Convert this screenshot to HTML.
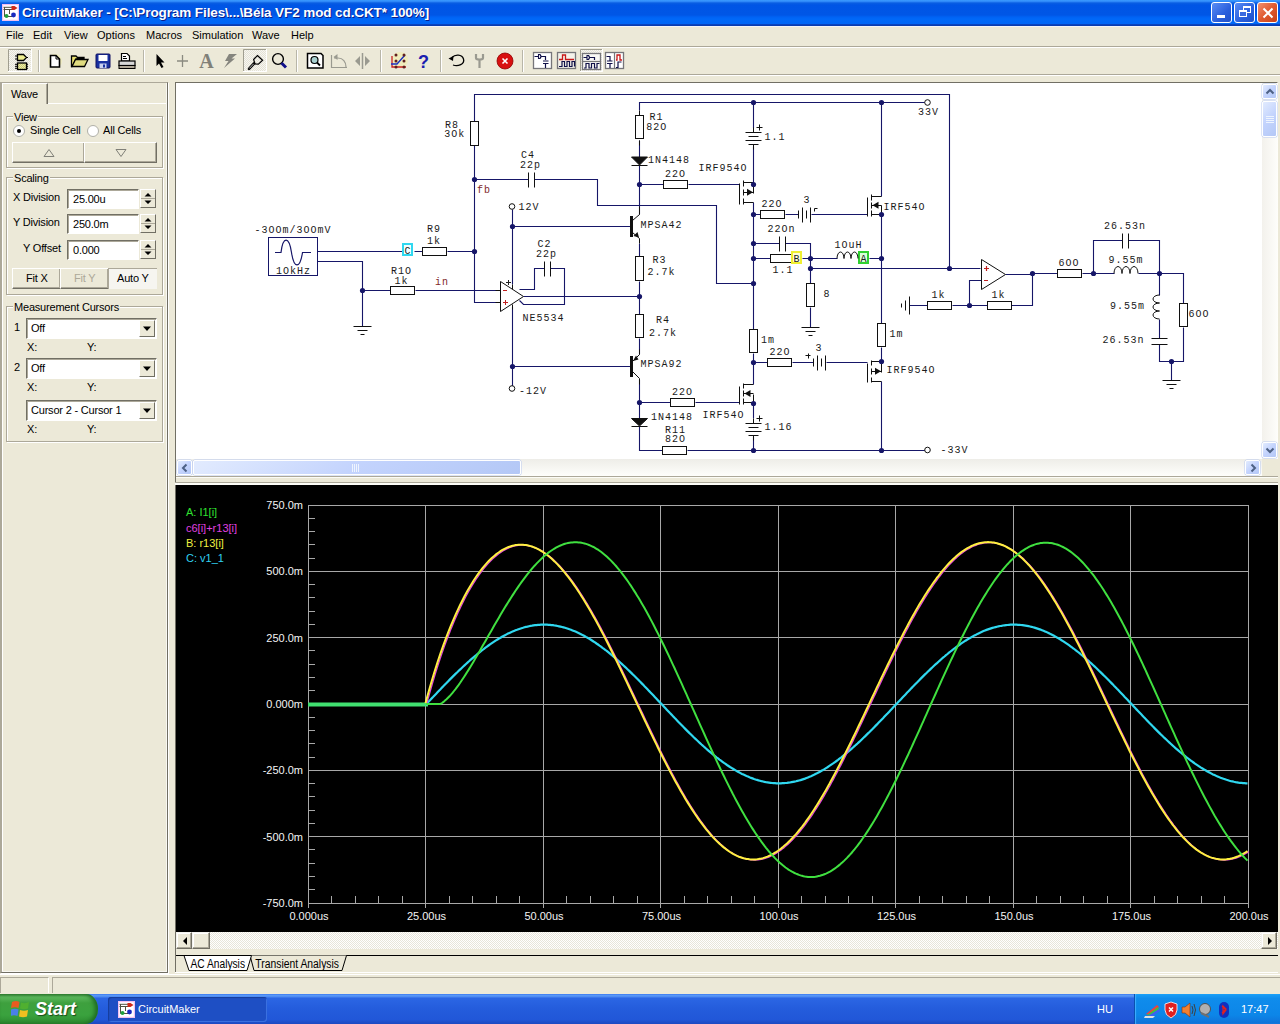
<!DOCTYPE html>
<html><head><meta charset="utf-8">
<style>
*{margin:0;padding:0;box-sizing:border-box}
html,body{width:1280px;height:1024px;overflow:hidden;background:#ECE9D8;font-family:"Liberation Sans",sans-serif;font-size:11px;color:#000}
.a{position:absolute}
#title{left:0;top:0;width:1280px;height:26px;background:linear-gradient(#3C9CFF 0px,#2E88F8 1.5px,#0A5EE2 3px,#0055E5 5px,#0056E6 15px,#0062F4 17px,#0068F8 19px,#0066F6 23.5px,#0A44C0 24.5px,#0838A8 26px)}
#title .t{left:22px;top:5px;color:#fff;font-weight:bold;font-size:13.5px;white-space:nowrap;letter-spacing:-0.1px;text-shadow:1px 1px 0 #0A1E8C}
.wb{top:2px;width:21px;height:21px;border:1px solid #fff;border-radius:3px;background:linear-gradient(135deg,#5A8DF5,#2A5FDC 60%,#2050C8)}
#menu{left:0;top:27px;width:1280px;height:19px;background:#ECE9D8}
#menu span{position:absolute;top:2px;font-size:11px}
.hl{background:#ACA899}
.hw{background:#fff}
.tbsep{width:1px;background:#ACA899;border-right:1px solid #fff}
.press{background:#F4F3EE;border:1px solid;border-color:#ACA899 #fff #fff #ACA899}
.grp{border:1px solid #ACA899;box-shadow:1px 1px 0 #fff,inset 1px 1px 0 #fff}
.grp .lbl{position:absolute;top:-6px;left:6px;background:#ECE9D8;padding:0 1px;font-size:11px}
.btn{background:#ECE9D8;border:1px solid;border-color:#fff #716F64 #716F64 #fff;box-shadow:inset -1px -1px 0 #ACA899}
.inp{background:#fff;border:1px solid;border-color:#716F64 #fff #fff #716F64;box-shadow:inset 1px 1px 0 #ACA899}
.mono{font-family:"Liberation Mono",monospace}
</style></head><body>

<!-- Title bar -->
<div id="title" class="a">
  <svg class="a" style="left:2px;top:4px" width="17" height="17" viewBox="0 0 17 17">
    <rect x="0.5" y="0.5" width="16" height="16" fill="#F8E0F8" stroke="#F0C0F0"/>
    <rect x="1.5" y="1.5" width="14" height="14" fill="#fff"/>
    <path d="M1.5 3.3h9M1.5 5.5h9M2.5 3v9.5h9M7.5 5.5v4.5" stroke="#505040" stroke-width="1" fill="none"/>
    <path d="M9.5 2 h3 l3 2 l-3 2 h-3z" fill="#D02818"/><circle cx="11.5" cy="11" r="2.4" fill="#1828C0"/><circle cx="4.5" cy="12" r="2" fill="#20A040"/>
  </svg>
  <div class="a t">CircuitMaker - [C:\Program Files\...\Béla VF2 mod cd.CKT* 100%]</div>
  <div class="a wb" style="left:1211px"><div class="a" style="left:5px;top:12px;width:8px;height:3px;background:#fff"></div></div>
  <div class="a wb" style="left:1234px"><div class="a" style="left:8px;top:3px;width:8px;height:7px;border:1px solid #fff;border-top-width:2px"></div><div class="a" style="left:4px;top:7px;width:8px;height:7px;border:1px solid #fff;border-top-width:2px;background:#3A6AE0"></div></div>
  <div class="a wb" style="left:1257px;background:linear-gradient(135deg,#F09070,#E05A30 50%,#C84018)"><svg class="a" style="left:4px;top:4px" width="12" height="12"><path d="M1.5 1.5L10.5 10.5M10.5 1.5L1.5 10.5" stroke="#fff" stroke-width="2"/></svg></div>
</div>

<div class="a" style="left:0;top:26px;width:1280px;height:1px;background:#F4F4F8"></div>
<!-- Menu -->
<div id="menu" class="a">
  <span style="left:6px">File</span><span style="left:33px">Edit</span><span style="left:64px">View</span><span style="left:97px">Options</span><span style="left:146px">Macros</span><span style="left:192px">Simulation</span><span style="left:252px">Wave</span><span style="left:291px">Help</span>
</div>
<div class="a hl" style="left:0;top:46px;width:1280px;height:1px"></div>
<div class="a hw" style="left:0;top:47px;width:1280px;height:1px"></div>
<!-- toolbar -->
<div class="a hl" style="left:0;top:74px;width:1280px;height:1px"></div>
<div class="a hw" style="left:0;top:75px;width:1280px;height:1px"></div>
<svg class="a" style="left:0;top:48px" width="640" height="26" viewBox="0 48 640 26">
<defs><pattern id="dith" width="2" height="2" patternUnits="userSpaceOnUse"><rect width="2" height="2" fill="#F7F6F1"/><rect width="1" height="1" fill="#E4E2D6"/><rect x="1" y="1" width="1" height="1" fill="#E4E2D6"/></pattern><pattern id="ydith" width="2" height="2" patternUnits="userSpaceOnUse"><rect width="2" height="2" fill="#F0F0A0"/><rect width="1" height="1" fill="#C8C880"/><rect x="1" y="1" width="1" height="1" fill="#C8C880"/></pattern></defs>
<rect x="8" y="49" width="24" height="23" fill="url(#dith)"/>
<path d="M8.5 72 V49.5 H32" stroke="#A09E90" fill="none"/>
<path d="M8 71.5 H31.5 V49" stroke="#FFFFFF" fill="none"/>
<rect x="243" y="49" width="24" height="23" fill="url(#dith)"/>
<path d="M243.5 72 V49.5 H267" stroke="#A09E90" fill="none"/>
<path d="M243 71.5 H266.5 V49" stroke="#FFFFFF" fill="none"/>
<rect x="580" y="49" width="23" height="23" fill="url(#dith)"/>
<path d="M580.5 72 V49.5 H603" stroke="#A09E90" fill="none"/>
<path d="M580 71.5 H602.5 V49" stroke="#FFFFFF" fill="none"/>
<rect x="38" y="50" width="1" height="22" fill="#B8B6A8"/><rect x="39" y="50" width="1" height="22" fill="#FFFFFF"/>
<rect x="143" y="50" width="1" height="22" fill="#B8B6A8"/><rect x="144" y="50" width="1" height="22" fill="#FFFFFF"/>
<rect x="296" y="50" width="1" height="22" fill="#B8B6A8"/><rect x="297" y="50" width="1" height="22" fill="#FFFFFF"/>
<rect x="380" y="50" width="1" height="22" fill="#B8B6A8"/><rect x="381" y="50" width="1" height="22" fill="#FFFFFF"/>
<rect x="440" y="50" width="1" height="22" fill="#B8B6A8"/><rect x="441" y="50" width="1" height="22" fill="#FFFFFF"/>
<rect x="522" y="50" width="1" height="22" fill="#B8B6A8"/><rect x="523" y="50" width="1" height="22" fill="#FFFFFF"/>
<path d="M17.5 54.5 H23.5 L26.5 57.5 L23.5 60.5 H17.5 Z" fill="#EEEE90" stroke="#000" stroke-width="1.3"/>
<path d="M15 56 H17.5 M15 59 H17.5 M26.5 57.5 H28" stroke="#000" stroke-width="1.2"/>
<rect x="17.5" y="63" width="9" height="6.5" fill="url(#ydith)" stroke="#000" stroke-width="1.3"/>
<path d="M15 64.3 H17.5 M15 66.3 H17.5 M15 68.3 H17.5 M26.5 64.3 H28 M26.5 66.3 H28 M26.5 68.3 H28" stroke="#000" stroke-width="1"/>
<circle cx="55" cy="61" r="7" fill="#F4F0A0" opacity="0.45"/>
<path d="M50.5 55.5 H56 L59.5 59 V67 H50.5 Z" fill="#fff" stroke="#000" stroke-width="1.6"/><path d="M56 55.5 V59 H59.5" fill="none" stroke="#000" stroke-width="1"/>
<path d="M71.5 56 H76 L77.5 57.5 H84 V59 H76 L72 66.5 H71.5 Z" fill="#E8E070" stroke="#000" stroke-width="1.3"/>
<path d="M72 66.5 L75.5 59.5 H88 L84.5 66.5 Z" fill="#E0DC80" stroke="#000" stroke-width="1.3"/>
<rect x="96" y="54" width="14" height="14" rx="1" fill="#1830A0" stroke="#101060"/>
<rect x="98.5" y="55" width="9" height="6" fill="#fff"/><rect x="99.5" y="63.5" width="7" height="4.5" fill="#C8D0F0"/><rect x="103" y="64.5" width="2" height="3" fill="#1830A0"/>
<path d="M121.5 53.5 H127 L129.5 56 V61 H121.5 Z" fill="#fff" stroke="#000" stroke-width="1.2"/><path d="M123 56.5 h3 M123 58.5 h4" stroke="#000" stroke-width="1"/>
<rect x="119" y="61" width="16" height="4.5" fill="#D8D8D8" stroke="#000" stroke-width="1.2"/><rect x="119" y="65.5" width="16" height="3" fill="#B0A898" stroke="#000" stroke-width="1"/>
<path d="M156.5 54 V66 L159 63.5 L161.5 68 L163.5 67 L161 62.5 H164.5 Z" fill="#000"/>
<path d="M182.5 55 V67 M177 61 H188" stroke="#8A8A80" stroke-width="1.3"/>
<text x="206.5" y="68" text-anchor="middle" font-family="Liberation Serif" font-weight="bold" font-size="20" fill="#808078">A</text>
<path d="M229 54 H237 L231.5 58.5 H235 L224 68 L228.5 61 H225 Z" fill="#85857E"/>
<path d="M257.4 55.5 L262.6 60.3 L258.4 64.2 L255 64 L253.6 59.5 Z" fill="none" stroke="#000" stroke-width="1.2"/><path d="M254 63.5 L249 68.8" stroke="#000" stroke-width="2.6" stroke-linecap="round"/><path d="M253.6 63.9 L249.4 68.4" stroke="#F0F0F0" stroke-width="0.8"/>
<circle cx="278" cy="59" r="5.4" fill="none" stroke="#000" stroke-width="1.4"/><path d="M281.5 63 L286 67.5" stroke="#10108A" stroke-width="3"/>
<path d="M307.5 53.5 H321 L323 55.5 V68 H307.5 Z" fill="#fff" stroke="#000" stroke-width="1.5"/><circle cx="314.5" cy="60" r="3.5" fill="#A8D0D0" stroke="#000" stroke-width="1.2"/><path d="M317 62.5 L320 65.5" stroke="#000" stroke-width="1.8"/>
<path d="M331.5 55 V67.5 H347 M334 58 H338 C343 58 346 62 346 67" fill="none" stroke="#9A9A90" stroke-width="1.2" stroke-dasharray="none"/><path d="M333.5 57 l4 -3 v6z" fill="#9A9A90"/>
<path d="M355 61 L360 56 V66 Z M370 61 L365 56 V66 Z" fill="#9A9A90"/><path d="M362.5 53 V69" stroke="#9A9A90" stroke-width="1.5"/>
<circle cx="400" cy="60" r="8" fill="#F4EFA0" opacity="0.5"/>
<path d="M392 56 V67 H406" fill="none" stroke="#C82020" stroke-width="1.3"/><path d="M391 64 H397 L405 55" fill="none" stroke="#1A30C0" stroke-width="1.4"/>
<circle cx="396" cy="55" r="1.5" fill="#602020"/>
<circle cx="404" cy="55" r="1.5" fill="#602020"/>
<circle cx="396" cy="61" r="1.5" fill="#602020"/>
<circle cx="404" cy="61" r="1.5" fill="#602020"/>
<circle cx="396" cy="67" r="1.5" fill="#602020"/>
<circle cx="404" cy="67" r="1.5" fill="#602020"/>
<text x="423.5" y="67.5" text-anchor="middle" font-family="Liberation Sans" font-weight="bold" font-size="18" fill="#1A20B0">?</text>
<path d="M452 57.5 C455 54 462 54 463.5 59 C465 64 458 67 453 65" fill="none" stroke="#000" stroke-width="1.3"/><path d="M448.5 58.5 L453.5 56 L453 61 Z" fill="#000"/>
<path d="M476 54 V58 C476 60 483 60 483 58 V54 M479.5 59 V68" fill="none" stroke="#9A9A90" stroke-width="2.2"/>
<circle cx="505" cy="61" r="8" fill="#D81010" stroke="#900000" stroke-width="0.8"/><path d="M502.5 58.5 L507.5 63.5 M507.5 58.5 L502.5 63.5" stroke="#fff" stroke-width="1.6"/>
<rect x="533.5" y="52.5" width="18.0" height="16.0" fill="#fff" stroke="#76767A" stroke-width="1.3"/>
<path d="M534.5 56.5 H538.5 M541 56.5 H545.5 V60 M545.5 63.5 V68 M543 61 H548.5 M543 63.5 H548.5" fill="none" stroke="#101048" stroke-width="1.2"/><path d="M538.5 54.5 H540 Q542 56.5 540 58.5 H538.5 Z" fill="#fff" stroke="#101048" stroke-width="1.1"/>
<rect x="557.5" y="52.5" width="18.0" height="16.0" fill="#F4F2EA" stroke="#76767A" stroke-width="1.3"/>
<path d="M559 59.5 H562.5 V55 H565.5 V59.5 H574" fill="none" stroke="#C81818" stroke-width="1.3"/><path d="M559 66.5 H562 V61.5 H564.5 V66.5 H567 V61.5 H569.5 V66.5 H572 V61.5 H574.5 V66.5" fill="none" stroke="#101048" stroke-width="1.2"/>
<rect x="582.5" y="53.5" width="18.0" height="16.0" fill="#F8F8F4" stroke="#76767A" stroke-width="1.3"/>
<path d="M582.5 61.5 H600.5" stroke="#76767A" stroke-width="1.2"/>
<path d="M583.5 57.5 H587 M589.5 57.5 H594.5 V60" fill="none" stroke="#101048" stroke-width="1.2"/><path d="M587 55.5 H588.5 Q590.5 57.5 588.5 59.5 H587 Z" fill="#fff" stroke="#101048" stroke-width="1.1"/>
<path d="M584 68 H586 V63.5 H589 V68 H591.5 V63.5 H594.5 V68 H597 V63.5 H599.5" fill="none" stroke="#101048" stroke-width="1.2"/>
<rect x="605.5" y="52.5" width="18.0" height="16.0" fill="#fff" stroke="#76767A" stroke-width="1.3"/>
<path d="M614.5 52.5 V68.5" stroke="#76767A" stroke-width="1.2"/>
<path d="M606.5 56.5 H610 V60.5 M607 61 H612.5 M607 63.5 H612.5 M610 64 V68" fill="none" stroke="#101048" stroke-width="1.2"/>
<path d="M616 60 H617 V55 H620 V60 H622" fill="none" stroke="#C81818" stroke-width="1.3"/><path d="M616 67.5 H618 V62 H621.5" fill="none" stroke="#101048" stroke-width="1.2"/>
</svg>

<!-- left panel -->
<div style="letter-spacing:-0.2px"><div class="a " style="left:0;top:82px;width:168px;height:891px;border-left:2px solid #ACA899;border-top:1px solid #ACA899;border-right:1px solid #716F64;border-bottom:1px solid #716F64;box-shadow:1px 1px 0 #fff,inset -1px -1px 0 #F8F7F2,inset 1px 0 0 #fff"></div>
<div class="a " style="left:47px;top:103px;width:119px;height:1px;background:#fff"></div>
<div class="a " style="left:2px;top:83px;width:46px;height:21px;background:#ECE9D8;border:1px solid;border-bottom:none;border-color:#fff #716F64 #fff #fff;box-shadow:inset -1px 0 0 #ACA899"><span class="a" style="left:8px;top:4px">Wave</span></div>
<div class="a grp" style="left:6px;top:116px;width:157px;height:52px"><span class="lbl">View</span></div>
<svg class="a" style="left:12px;top:124px" width="14" height="14"><circle cx="7" cy="7" r="5.5" fill="#fff" stroke="#B0B0A8"/><circle cx="7" cy="7" r="2" fill="#000"/></svg>
<div class="a " style="left:30px;top:124px">Single Cell</div>
<svg class="a" style="left:86px;top:124px" width="14" height="14"><circle cx="7" cy="7" r="5.5" fill="#fff" stroke="#B0B0A8"/></svg>
<div class="a " style="left:103px;top:124px">All Cells</div>
<div class="a btn" style="left:12px;top:142px;width:73px;height:21px"><svg class="a" style="left:30px;top:5px" width="12" height="10"><path d="M1 8.5 H11 L6 1.5 Z" fill="none" stroke="#808078"/></svg></div>
<div class="a btn" style="left:84px;top:142px;width:73px;height:21px"><svg class="a" style="left:30px;top:5px" width="12" height="10"><path d="M1 1.5 H11 L6 8.5 Z" fill="none" stroke="#808078"/></svg></div>
<div class="a grp" style="left:6px;top:177px;width:157px;height:118px"><span class="lbl">Scaling</span></div>
<div class="a " style="left:13px;top:191px">X Division</div>
<div class="a inp" style="left:67px;top:189px;width:72px;height:20px"><span class="a" style="left:5px;top:3px">25.00u</span></div>
<div class="a " style="left:140px;top:189px;width:16px;height:19px;background:#ECE9D8;border:1px solid;border-color:#fff #716F64 #716F64 #fff"><svg class="a" style="left:0;top:0" width="14" height="17"><path d="M3.5 6.5 H10.5 L7 3 Z M3.5 10.5 H10.5 L7 14 Z" fill="#000"/><path d="M0 8.5 H14" stroke="#ACA899"/></svg></div>
<div class="a " style="left:13px;top:216px">Y Division</div>
<div class="a inp" style="left:67px;top:214px;width:72px;height:20px"><span class="a" style="left:5px;top:3px">250.0m</span></div>
<div class="a " style="left:140px;top:214px;width:16px;height:19px;background:#ECE9D8;border:1px solid;border-color:#fff #716F64 #716F64 #fff"><svg class="a" style="left:0;top:0" width="14" height="17"><path d="M3.5 6.5 H10.5 L7 3 Z M3.5 10.5 H10.5 L7 14 Z" fill="#000"/><path d="M0 8.5 H14" stroke="#ACA899"/></svg></div>
<div class="a " style="left:23px;top:242px">Y Offset</div>
<div class="a inp" style="left:67px;top:240px;width:72px;height:20px"><span class="a" style="left:5px;top:3px">0.000</span></div>
<div class="a " style="left:140px;top:240px;width:16px;height:19px;background:#ECE9D8;border:1px solid;border-color:#fff #716F64 #716F64 #fff"><svg class="a" style="left:0;top:0" width="14" height="17"><path d="M3.5 6.5 H10.5 L7 3 Z M3.5 10.5 H10.5 L7 14 Z" fill="#000"/><path d="M0 8.5 H14" stroke="#ACA899"/></svg></div>
<div class="a btn" style="left:12px;top:268px;width:49px;height:21px"><span class="a" style="left:13px;top:3px">Fit X</span></div>
<div class="a btn" style="left:60px;top:268px;width:49px;height:21px"><span class="a" style="left:13px;top:3px;color:#ACA899">Fit Y</span></div>
<div class="a " style="left:108px;top:268px;width:49px;height:21px;background:#F6F5F0;border-color:#716F64 #fff #fff #716F64;box-shadow:inset 1px 1px 0 #ACA899"><span class="a" style="left:9px;top:4px">Auto Y</span></div>
<div class="a grp" style="left:6px;top:306px;width:157px;height:136px"><span class="lbl">Measurement Cursors</span></div>
<div class="a " style="left:14px;top:321px">1</div>
<div class="a inp" style="left:26px;top:318px;width:131px;height:21px"><span class="a" style="left:4px;top:3px">Off</span><div class="a" style="right:1px;top:1px;width:16px;height:17px;background:#ECE9D8;border:1px solid;border-color:#fff #716F64 #716F64 #fff"><svg class="a" style="left:3px;top:5px" width="9" height="6"><path d="M0 0.5 H8 L4 5 Z" fill="#000"/></svg></div></div>
<div class="a " style="left:27px;top:341px">X:</div>
<div class="a " style="left:87px;top:341px">Y:</div>
<div class="a " style="left:14px;top:361px">2</div>
<div class="a inp" style="left:26px;top:358px;width:131px;height:21px"><span class="a" style="left:4px;top:3px">Off</span><div class="a" style="right:1px;top:1px;width:16px;height:17px;background:#ECE9D8;border:1px solid;border-color:#fff #716F64 #716F64 #fff"><svg class="a" style="left:3px;top:5px" width="9" height="6"><path d="M0 0.5 H8 L4 5 Z" fill="#000"/></svg></div></div>
<div class="a " style="left:27px;top:381px">X:</div>
<div class="a " style="left:87px;top:381px">Y:</div>
<div class="a inp" style="left:26px;top:400px;width:131px;height:21px"><span class="a" style="left:4px;top:3px">Cursor 2 - Cursor 1</span><div class="a" style="right:1px;top:1px;width:16px;height:17px;background:#ECE9D8;border:1px solid;border-color:#fff #716F64 #716F64 #fff"><svg class="a" style="left:3px;top:5px" width="9" height="6"><path d="M0 0.5 H8 L4 5 Z" fill="#000"/></svg></div></div>
<div class="a " style="left:27px;top:423px">X:</div>
<div class="a " style="left:87px;top:423px">Y:</div></div>

<!-- schematic -->
<div class="a" style="left:175px;top:82px;width:1103px;height:395px;border:1px solid;border-color:#716F64 #fff #fff #716F64;background:#fff"></div>
<svg class="a" style="left:176px;top:83px" width="1086" height="377" viewBox="176 83 1086 377">
<g fill="none" stroke="#161668" stroke-width="1.1"><path d="M474.5 146.5 L474.5 94.5 L949.5 94.5 L949.5 268.5 M474.5 121.5 L474.5 94.5 M639.5 110.5 L639.5 102.5 L925.5 102.5 M474.5 146.5 L474.5 302.5 L500.5 302.5 M317.5 251.5 L402.5 251.5 M414.5 251.5 L422.5 251.5 M447.5 251.5 L474.5 251.5 M317.5 261.5 L362.5 261.5 L362.5 326.5 M362.5 290.5 L390.5 290.5 M415.5 290.5 L500.5 290.5 M474.5 179.5 L528.5 179.5 M534.5 179.5 L597.5 179.5 L597.5 205.5 L716.5 205.5 L716.5 283.5 L753.5 283.5 M512.5 209.5 L512.5 284.5 M512.5 226.5 L630.5 226.5 M512.5 306.5 L512.5 386.5 M512.5 366.5 L630.5 366.5 M519.5 289.5 L534.5 289.5 L534.5 268.5 L544.5 268.5 M550.5 268.5 L564.5 268.5 L564.5 304.5 L523.5 304.5 L519.5 300.5 M523.5 296.5 L639.5 296.5 M639.5 140.5 L639.5 157.5 M639.5 165.5 L639.5 214.5 M639.5 243.5 L639.5 256.5 M639.5 281.5 L639.5 314.5 M639.5 338.5 L639.5 354.5 M639.5 379.5 L639.5 418.5 M639.5 426.5 L639.5 450.5 L662.5 450.5 M639.5 184.5 L663.5 184.5 M688.5 184.5 L739.5 184.5 M639.5 402.5 L670.5 402.5 M695.5 402.5 L739.5 402.5 M687.5 450.5 L925.5 450.5 M753.5 102.5 L753.5 128.5 M753.5 146.5 L753.5 182.5 M753.5 202.5 L753.5 329.5 M753.5 353.5 L753.5 384.5 M753.5 402.5 L753.5 418.5 M753.5 436.5 L753.5 450.5 M753.5 214.5 L760.5 214.5 M785.5 214.5 L798.5 214.5 M811.5 214.5 L867.5 214.5 M753.5 243.5 L779.5 243.5 M785.5 243.5 L810.5 243.5 L810.5 283.5 M753.5 258.5 L770.5 258.5 M802.5 258.5 L837.5 258.5 M869.5 258.5 L881.5 258.5 M810.5 307.5 L810.5 327.5 M810.5 268.5 L980.5 268.5 M753.5 362.5 L767.5 362.5 M792.5 362.5 L813.5 362.5 M826.5 362.5 L867.5 362.5 M881.5 102.5 L881.5 196.5 M881.5 214.5 L881.5 323.5 M881.5 347.5 L881.5 361.5 M881.5 381.5 L881.5 450.5 M1005.5 274.5 L1032.5 274.5 L1032.5 305.5 L1011.5 305.5 M1032.5 273.5 L1057.5 273.5 M1082.5 273.5 L1114.5 273.5 M1138.5 273.5 L1183.5 273.5 L1183.5 303.5 M1093.5 273.5 L1093.5 240.5 L1122.5 240.5 M1128.5 240.5 L1159.5 240.5 L1159.5 295.5 M1159.5 319.5 L1159.5 338.5 M1159.5 344.5 L1159.5 361.5 L1183.5 361.5 L1183.5 327.5 M1171.5 361.5 L1171.5 380.5 M981.5 280.5 L969.5 280.5 L969.5 305.5 L987.5 305.5 M909.5 305.5 L927.5 305.5 M952.5 305.5 L969.5 305.5"/></g>
<g fill="none" stroke="#101010" stroke-width="1"><path d="M639.5 110.5 L639.5 115.5 M639.5 140.5 L639.5 145.5 M528.5 172.5 L528.5 187.5 M534.5 172.5 L534.5 187.5 M544.5 261.5 L544.5 276.5 M550.5 261.5 L550.5 276.5 M779.5 236.5 L779.5 251.5 M785.5 236.5 L785.5 251.5 M1122.5 233.5 L1122.5 248.5 M1128.5 233.5 L1128.5 248.5 M1151.5 338.5 L1167.5 338.5 M1151.5 344.5 L1167.5 344.5 M631.5 165.5 L647.5 165.5 M631.5 426.5 L647.5 426.5 M353.5 326.5 L371.5 326.5 M357.5 330.5 L367.5 330.5 M360.5 334.5 L364.5 334.5 M801.5 327.5 L819.5 327.5 M805.5 331.5 L815.5 331.5 M808.5 335.5 L812.5 335.5 M1162.5 380.5 L1180.5 380.5 M1166.5 384.5 L1176.5 384.5 M1169.5 388.5 L1173.5 388.5 M909.5 296.5 L909.5 314.5 M905.5 300.5 L905.5 310.5 M901.5 303.5 L901.5 307.5 M745.5 132.5 L761.5 132.5 M748.5 136.5 L758.5 136.5 M745.5 140.5 L761.5 140.5 M748.5 144.5 L758.5 144.5 M753.5 127.5 L753.5 132.5 M753.5 144.5 L753.5 149.5 M756.5 127.5 L762.5 127.5 M759.5 124.5 L759.5 130.5 M745.5 423.5 L761.5 423.5 M748.5 427.5 L758.5 427.5 M745.5 431.5 L761.5 431.5 M748.5 435.5 L758.5 435.5 M753.5 418.5 L753.5 423.5 M753.5 435.5 L753.5 440.5 M756.5 418.5 L762.5 418.5 M759.5 415.5 L759.5 421.5 M798.5 210.5 L798.5 218.5 M802.5 207.5 L802.5 222.5 M806.5 210.5 L806.5 218.5 M810.5 207.5 L810.5 222.5 M813.5 358.5 L813.5 366.5 M817.5 355.5 L817.5 370.5 M821.5 358.5 L821.5 366.5 M825.5 355.5 L825.5 370.5 M814.5 208.5 L817.5 208.5 M814.5 208.5 L814.5 211.5 M805.5 355.5 L810.5 355.5 M808.5 353.5 L808.5 358.5 M639.5 206.5 L639.5 214.5 L632.5 220.5 M632.5 232.5 L639.5 238.5 L639.5 243.5 M639.5 349.5 L639.5 354.5 L632.5 361.5 M632.5 371.5 L639.5 378.5 L639.5 384.5 M495.5 290.5 L500.5 290.5 M495.5 302.5 L500.5 302.5 M512.5 284.5 L512.5 289.5 M512.5 304.5 L512.5 309.5 M739.5 183.5 L739.5 204.5 M743.5 180.5 L743.5 186.5 M743.5 189.5 L743.5 195.5 M743.5 198.5 L743.5 204.5 M743.5 182.5 L753.5 182.5 M743.5 192.5 L753.5 192.5 M743.5 202.5 L753.5 202.5 M753.5 183.5 L753.5 193.5 M867.5 197.5 L867.5 216.5 M871.5 194.5 L871.5 200.5 M871.5 202.5 L871.5 208.5 M871.5 210.5 L871.5 216.5 M871.5 196.5 L881.5 196.5 M871.5 205.5 L881.5 205.5 M871.5 214.5 L881.5 214.5 M881.5 205.5 L881.5 216.5 M867.5 363.5 L867.5 382.5 M871.5 360.5 L871.5 365.5 M871.5 368.5 L871.5 374.5 M871.5 377.5 L871.5 382.5 M871.5 361.5 L881.5 361.5 M871.5 371.5 L881.5 371.5 M871.5 381.5 L881.5 381.5 M881.5 362.5 L881.5 372.5 M739.5 386.5 L739.5 404.5 M743.5 383.5 L743.5 388.5 M743.5 390.5 L743.5 396.5 M743.5 398.5 L743.5 404.5 M743.5 384.5 L753.5 384.5 M743.5 393.5 L753.5 393.5 M743.5 402.5 L753.5 402.5 M753.5 394.5 L753.5 405.5"/></g>
<g stroke-width="1"><rect x="268.5" y="237.5" width="49" height="38" fill="none" stroke="#161668"/><path d="M275 252.5 H281 C283 236 289 236 291.5 252.5 C294 269 300 269 302.5 252.5 H311" fill="none" stroke="#161668" stroke-width="1.2"/><rect x="402" y="243" width="11" height="13" fill="#30D8F0"/><rect x="404" y="245" width="7" height="9" fill="#F4FFFF"/><rect x="470.5" y="121.5" width="8" height="24" fill="#fff" stroke="#101010"/><rect x="422.5" y="247.5" width="24" height="8" fill="#fff" stroke="#101010"/><rect x="390.5" y="286.5" width="24" height="8" fill="#fff" stroke="#101010"/><rect x="635.5" y="115.5" width="8" height="23" fill="#fff" stroke="#101010"/><rect x="635.5" y="256.5" width="8" height="24" fill="#fff" stroke="#101010"/><rect x="635.5" y="314.5" width="8" height="23" fill="#fff" stroke="#101010"/><rect x="663.5" y="180.5" width="24" height="8" fill="#fff" stroke="#101010"/><rect x="670.5" y="398.5" width="24" height="8" fill="#fff" stroke="#101010"/><rect x="662.5" y="446.5" width="24" height="8" fill="#fff" stroke="#101010"/><rect x="760.5" y="210.5" width="24" height="8" fill="#fff" stroke="#101010"/><rect x="767.5" y="358.5" width="24" height="8" fill="#fff" stroke="#101010"/><rect x="770.5" y="254.5" width="24" height="8" fill="#fff" stroke="#101010"/><rect x="806.5" y="283.5" width="8" height="23" fill="#fff" stroke="#101010"/><rect x="877.5" y="323.5" width="8" height="23" fill="#fff" stroke="#101010"/><rect x="749.5" y="329.5" width="8" height="23" fill="#fff" stroke="#101010"/><rect x="927.5" y="301.5" width="24" height="8" fill="#fff" stroke="#101010"/><rect x="987.5" y="301.5" width="24" height="8" fill="#fff" stroke="#101010"/><rect x="1057.5" y="269.5" width="24" height="8" fill="#fff" stroke="#101010"/><rect x="1179.5" y="303.5" width="8" height="23" fill="#fff" stroke="#101010"/><rect x="791" y="251" width="11" height="13" fill="#F0F030"/><rect x="793" y="253" width="7" height="9" fill="#FFFFD8"/><rect x="858" y="251" width="11" height="13" fill="#30D030"/><rect x="860" y="253" width="7" height="9" fill="#D8FFD8"/><path d="M631.5 157.0 H647.5 L639.5 165.0 Z" fill="#101010" stroke="#101010"/><path d="M631.5 418.5 H647.5 L639.5 426.0 Z" fill="#101010" stroke="#101010"/><circle cx="512.0" cy="206.5" r="2.8" fill="#fff" stroke="#101010"/><circle cx="512.0" cy="388.5" r="2.8" fill="#fff" stroke="#101010"/><circle cx="927.5" cy="102.5" r="2.8" fill="#fff" stroke="#101010"/><circle cx="927.5" cy="450.0" r="2.8" fill="#fff" stroke="#101010"/><path d="M837.0 258.5 a3.50 6.50 0 0 1 7.00 0 a3.50 6.50 0 0 1 7.00 0 a3.50 6.50 0 0 1 7.00 0" fill="none" stroke="#101010"/><path d="M1114.0 273.5 a4.00 7.00 0 0 1 8.00 0 a4.00 7.00 0 0 1 8.00 0 a4.00 7.00 0 0 1 8.00 0" fill="none" stroke="#101010"/><path d="M1159.5 295 a6.5 4 0 0 0 0 8 a6.5 4 0 0 0 0 8 a6.5 4 0 0 0 0 8" fill="none" stroke="#101010"/><rect x="630" y="216" width="3" height="21" fill="#101010"/><path d="M639 237.5 L633.5 236 L637.5 232 Z" fill="#101010"/><rect x="630" y="356" width="3" height="21" fill="#101010"/><path d="M633 361 L636 355.5 L638.5 359.5 Z" fill="#101010"/><path d="M500.5 281.5 V311.5 L523.5 296.5 Z" fill="#fff" stroke="#101010"/><path d="M503 290.5 h4 M503 302.5 h5 M505.5 300 v5" stroke="#C02020" fill="none"/><path d="M506 282.5 h5 M508.5 280 v5" stroke="#202020" fill="none"/><path d="M981.5 259.5 V289.5 L1005.5 274.5 Z" fill="#fff" stroke="#101010"/><path d="M984 268.5 h5 M986.5 266 v5 M984 280.5 h4" stroke="#C02020" fill="none" stroke-width="1.2"/><path d="M753.0 192.2 l-6 -3.5 v7z" fill="#101010"/><path d="M872.5 205.2 l6 -3.5 v7z" fill="#101010"/><path d="M881.0 371.2 l-6 -3.5 v7z" fill="#101010"/><path d="M744.5 393.5 l6 -3.5 v7z" fill="#101010"/></g>
<g fill="#161668"><circle cx="474.5" cy="179.5" r="2.6"/><circle cx="474.5" cy="251.5" r="2.6"/><circle cx="362.5" cy="290.5" r="2.6"/><circle cx="512.5" cy="226.5" r="2.6"/><circle cx="512.5" cy="366.5" r="2.6"/><circle cx="639.5" cy="184.5" r="2.6"/><circle cx="639.5" cy="296.5" r="2.6"/><circle cx="639.5" cy="402.5" r="2.6"/><circle cx="753.5" cy="102.5" r="2.6"/><circle cx="753.5" cy="184.5" r="2.6"/><circle cx="753.5" cy="214.5" r="2.6"/><circle cx="753.5" cy="243.5" r="2.6"/><circle cx="753.5" cy="258.5" r="2.6"/><circle cx="753.5" cy="283.5" r="2.6"/><circle cx="753.5" cy="362.5" r="2.6"/><circle cx="753.5" cy="403.5" r="2.6"/><circle cx="753.5" cy="450.5" r="2.6"/><circle cx="810.5" cy="258.5" r="2.6"/><circle cx="810.5" cy="268.5" r="2.6"/><circle cx="881.5" cy="102.5" r="2.6"/><circle cx="881.5" cy="214.5" r="2.6"/><circle cx="881.5" cy="258.5" r="2.6"/><circle cx="881.5" cy="361.5" r="2.6"/><circle cx="881.5" cy="450.5" r="2.6"/><circle cx="949.5" cy="268.5" r="2.6"/><circle cx="969.5" cy="305.5" r="2.6"/><circle cx="1032.5" cy="273.5" r="2.6"/><circle cx="1093.5" cy="273.5" r="2.6"/><circle cx="1159.5" cy="273.5" r="2.6"/><circle cx="1171.5" cy="361.5" r="2.6"/></g>
<g font-family="Liberation Mono" font-size="10" letter-spacing="1"><text x="404.6" y="253.5" fill="#202020">C</text><text x="793.6" y="261.5" fill="#202020">B</text><text x="860.6" y="261.5" fill="#202020">A</text><text x="254.4" y="232.9" fill="#1A1A1A" text-anchor="start">-3OOm/3OOmV</text><text x="275.9" y="273.6" fill="#1A1A1A" text-anchor="start">1OkHz</text><text x="444.9" y="127.5" fill="#1A1A1A" text-anchor="start">R8</text><text x="444.2" y="136.9" fill="#1A1A1A" text-anchor="start">3Ok</text><text x="426.9" y="231.8" fill="#1A1A1A" text-anchor="start">R9</text><text x="426.9" y="243.6" fill="#1A1A1A" text-anchor="start">1k</text><text x="390.9" y="273.6" fill="#1A1A1A" text-anchor="start">R1O</text><text x="394.4" y="283.6" fill="#1A1A1A" text-anchor="start">1k</text><text x="434.9" y="284.8" fill="#802828" text-anchor="start">in</text><text x="476.9" y="193.3" fill="#802828" text-anchor="start">fb</text><text x="520.9" y="158.2" fill="#1A1A1A" text-anchor="start">C4</text><text x="519.9" y="168.2" fill="#1A1A1A" text-anchor="start">22p</text><text x="518.4" y="209.8" fill="#1A1A1A" text-anchor="start">12V</text><text x="518.9" y="393.9" fill="#1A1A1A" text-anchor="start">-12V</text><text x="537.4" y="247.1" fill="#1A1A1A" text-anchor="start">C2</text><text x="535.9" y="257.3" fill="#1A1A1A" text-anchor="start">22p</text><text x="522.4" y="321.3" fill="#1A1A1A" text-anchor="start">NE5534</text><text x="649.4" y="120.2" fill="#1A1A1A" text-anchor="start">R1</text><text x="646.2" y="129.6" fill="#1A1A1A" text-anchor="start">82O</text><text x="647.9" y="163.2" fill="#1A1A1A" text-anchor="start">1N4148</text><text x="664.9" y="176.9" fill="#1A1A1A" text-anchor="start">22O</text><text x="698.4" y="171.0" fill="#1A1A1A" text-anchor="start">IRF954O</text><text x="640.4" y="228.0" fill="#1A1A1A" text-anchor="start">MPSA42</text><text x="652.4" y="262.7" fill="#1A1A1A" text-anchor="start">R3</text><text x="647.4" y="275.2" fill="#1A1A1A" text-anchor="start">2.7k</text><text x="655.9" y="322.8" fill="#1A1A1A" text-anchor="start">R4</text><text x="648.9" y="336.1" fill="#1A1A1A" text-anchor="start">2.7k</text><text x="640.4" y="367.3" fill="#1A1A1A" text-anchor="start">MPSA92</text><text x="650.9" y="419.7" fill="#1A1A1A" text-anchor="start">1N4148</text><text x="671.9" y="395.2" fill="#1A1A1A" text-anchor="start">22O</text><text x="664.9" y="432.7" fill="#1A1A1A" text-anchor="start">R11</text><text x="664.9" y="441.6" fill="#1A1A1A" text-anchor="start">82O</text><text x="702.4" y="418.1" fill="#1A1A1A" text-anchor="start">IRF54O</text><text x="764.4" y="139.5" fill="#1A1A1A" text-anchor="start">1.1</text><text x="761.4" y="207.1" fill="#1A1A1A" text-anchor="start">22O</text><text x="803.4" y="203.1" fill="#1A1A1A" text-anchor="start">3</text><text x="767.4" y="232.1" fill="#1A1A1A" text-anchor="start">22On</text><text x="772.4" y="272.7" fill="#1A1A1A" text-anchor="start">1.1</text><text x="834.4" y="247.7" fill="#1A1A1A" text-anchor="start">1OuH</text><text x="823.4" y="296.9" fill="#1A1A1A" text-anchor="start">8</text><text x="760.9" y="343.1" fill="#1A1A1A" text-anchor="start">1m</text><text x="769.4" y="354.9" fill="#1A1A1A" text-anchor="start">22O</text><text x="815.4" y="351.0" fill="#1A1A1A" text-anchor="start">3</text><text x="764.4" y="430.2" fill="#1A1A1A" text-anchor="start">1.16</text><text x="917.9" y="114.7" fill="#1A1A1A" text-anchor="start">33V</text><text x="883.4" y="210.1" fill="#1A1A1A" text-anchor="start">IRF54O</text><text x="889.4" y="337.3" fill="#1A1A1A" text-anchor="start">1m</text><text x="886.4" y="372.8" fill="#1A1A1A" text-anchor="start">IRF954O</text><text x="940.4" y="452.6" fill="#1A1A1A" text-anchor="start">-33V</text><text x="931.4" y="297.7" fill="#1A1A1A" text-anchor="start">1k</text><text x="991.4" y="297.7" fill="#1A1A1A" text-anchor="start">1k</text><text x="1058.4" y="265.8" fill="#1A1A1A" text-anchor="start">6OO</text><text x="1103.9" y="229.2" fill="#1A1A1A" text-anchor="start">26.53n</text><text x="1108.4" y="263.1" fill="#1A1A1A" text-anchor="start">9.55m</text><text x="1109.9" y="308.8" fill="#1A1A1A" text-anchor="start">9.55m</text><text x="1102.4" y="343.1" fill="#1A1A1A" text-anchor="start">26.53n</text><text x="1188.4" y="316.7" fill="#1A1A1A" text-anchor="start">6OO</text></g>
</svg>

<!-- graph -->
<div class="a" style="left:176px;top:485px;width:1102px;height:447px;background:#000"></div>
<svg class="a" style="left:176px;top:485px" width="1102" height="447" viewBox="176 485 1102 447">
<g stroke="#A8A8A8" stroke-width="1" fill="none" shape-rendering="crispEdges"><path d="M308.0 505 V908" /><path d="M425.5 505 V908" /><path d="M543.0 505 V908" /><path d="M660.5 505 V908" /><path d="M778.0 505 V908" /><path d="M895.5 505 V908" /><path d="M1013.0 505 V908" /><path d="M1130.5 505 V908" /><path d="M1248.0 505 V908" /><path d="M308 505.0 H1248" /><path d="M308 571.3 H1248" /><path d="M308 637.7 H1248" /><path d="M308 704.0 H1248" /><path d="M308 770.3 H1248" /><path d="M308 836.7 H1248" /><path d="M308 903.0 H1248" /><path d="M308 518.3 h7" /><path d="M308 531.5 h7" /><path d="M308 544.8 h7" /><path d="M308 558.1 h7" /><path d="M308 584.6 h7" /><path d="M308 597.9 h7" /><path d="M308 611.1 h7" /><path d="M308 624.4 h7" /><path d="M308 650.9 h7" /><path d="M308 664.2 h7" /><path d="M308 677.5 h7" /><path d="M308 690.7 h7" /><path d="M308 717.3 h7" /><path d="M308 730.5 h7" /><path d="M308 743.8 h7" /><path d="M308 757.1 h7" /><path d="M308 783.6 h7" /><path d="M308 796.9 h7" /><path d="M308 810.1 h7" /><path d="M308 823.4 h7" /><path d="M308 849.9 h7" /><path d="M308 863.2 h7" /><path d="M308 876.5 h7" /><path d="M308 889.7 h7" /><path d="M331.5 903 v-7" /><path d="M355.0 903 v-7" /><path d="M378.5 903 v-7" /><path d="M402.0 903 v-7" /><path d="M449.0 903 v-7" /><path d="M472.5 903 v-7" /><path d="M496.0 903 v-7" /><path d="M519.5 903 v-7" /><path d="M566.5 903 v-7" /><path d="M590.0 903 v-7" /><path d="M613.5 903 v-7" /><path d="M637.0 903 v-7" /><path d="M684.0 903 v-7" /><path d="M707.5 903 v-7" /><path d="M731.0 903 v-7" /><path d="M754.5 903 v-7" /><path d="M801.5 903 v-7" /><path d="M825.0 903 v-7" /><path d="M848.5 903 v-7" /><path d="M872.0 903 v-7" /><path d="M919.0 903 v-7" /><path d="M942.5 903 v-7" /><path d="M966.0 903 v-7" /><path d="M989.5 903 v-7" /><path d="M1036.5 903 v-7" /><path d="M1060.0 903 v-7" /><path d="M1083.5 903 v-7" /><path d="M1107.0 903 v-7" /><path d="M1154.0 903 v-7" /><path d="M1177.5 903 v-7" /><path d="M1201.0 903 v-7" /><path d="M1224.5 903 v-7" /></g>
<g fill="#F4F4F4" font-family="Liberation Sans" font-size="11"><text x="303" y="509.0" text-anchor="end">750.0m</text><text x="303" y="575.3" text-anchor="end">500.0m</text><text x="303" y="641.7" text-anchor="end">250.0m</text><text x="303" y="708.0" text-anchor="end">0.000m</text><text x="303" y="774.3" text-anchor="end">-250.0m</text><text x="303" y="840.7" text-anchor="end">-500.0m</text><text x="303" y="907.0" text-anchor="end">-750.0m</text><text x="309.0" y="920" text-anchor="middle">0.000us</text><text x="426.5" y="920" text-anchor="middle">25.00us</text><text x="544.0" y="920" text-anchor="middle">50.00us</text><text x="661.5" y="920" text-anchor="middle">75.00us</text><text x="779.0" y="920" text-anchor="middle">100.0us</text><text x="896.5" y="920" text-anchor="middle">125.0us</text><text x="1014.0" y="920" text-anchor="middle">150.0us</text><text x="1131.5" y="920" text-anchor="middle">175.0us</text><text x="1249.0" y="920" text-anchor="middle">200.0us</text></g>
<g font-family="Liberation Sans" font-size="11"><text x="186" y="516" fill="#30E030">A: I1[i]</text><text x="186" y="532" fill="#E040E0">c6[i]+r13[i]</text><text x="186" y="547" fill="#F0F040">B: r13[i]</text><text x="186" y="562" fill="#30D0F0">C: v1_1</text></g>
<path d="M308 704.5 H428" stroke="#40E070" stroke-width="4" fill="none"/>
<path d="M425.5,705.0 L427.0,703.4 L428.5,701.8 L430.0,700.2 L431.5,698.6 L433.0,697.1 L434.5,695.5 L436.0,693.9 L437.5,692.3 L439.0,690.7 L440.5,689.2 L442.0,687.6 L443.5,686.1 L445.0,684.5 L446.5,683.0 L448.0,681.4 L449.5,679.9 L451.0,678.4 L452.5,676.9 L454.0,675.4 L455.5,673.9 L457.0,672.5 L458.5,671.0 L460.0,669.6 L461.5,668.2 L463.0,666.8 L464.5,665.4 L466.0,664.0 L467.5,662.6 L469.0,661.3 L470.5,659.9 L472.0,658.6 L473.5,657.3 L475.0,656.0 L476.5,654.8 L478.0,653.5 L479.5,652.3 L481.0,651.1 L482.5,650.0 L484.0,648.8 L485.5,647.7 L487.0,646.6 L488.5,645.5 L490.0,644.4 L491.5,643.4 L493.0,642.4 L494.5,641.4 L496.0,640.4 L497.5,639.5 L499.0,638.6 L500.5,637.7 L502.0,636.8 L503.5,636.0 L505.0,635.2 L506.5,634.4 L508.0,633.6 L509.5,632.9 L511.0,632.2 L512.5,631.6 L514.0,630.9 L515.5,630.3 L517.0,629.8 L518.5,629.2 L520.0,628.7 L521.5,628.2 L523.0,627.8 L524.5,627.3 L526.0,626.9 L527.5,626.6 L529.0,626.2 L530.5,625.9 L532.0,625.7 L533.5,625.4 L535.0,625.2 L536.5,625.1 L538.0,624.9 L539.5,624.8 L541.0,624.7 L542.5,624.7 L544.0,624.7 L545.5,624.7 L547.0,624.7 L548.5,624.8 L550.0,624.9 L551.5,625.1 L553.0,625.2 L554.5,625.5 L556.0,625.7 L557.5,626.0 L559.0,626.3 L560.5,626.6 L562.0,627.0 L563.5,627.4 L565.0,627.8 L566.5,628.2 L568.0,628.7 L569.5,629.3 L571.0,629.8 L572.5,630.4 L574.0,631.0 L575.5,631.6 L577.0,632.3 L578.5,633.0 L580.0,633.7 L581.5,634.5 L583.0,635.2 L584.5,636.0 L586.0,636.9 L587.5,637.7 L589.0,638.6 L590.5,639.5 L592.0,640.5 L593.5,641.5 L595.0,642.4 L596.5,643.5 L598.0,644.5 L599.5,645.6 L601.0,646.6 L602.5,647.8 L604.0,648.9 L605.5,650.0 L607.0,651.2 L608.5,652.4 L610.0,653.6 L611.5,654.9 L613.0,656.1 L614.5,657.4 L616.0,658.7 L617.5,660.0 L619.0,661.4 L620.5,662.7 L622.0,664.1 L623.5,665.5 L625.0,666.9 L626.5,668.3 L628.0,669.7 L629.5,671.1 L631.0,672.6 L632.5,674.1 L634.0,675.5 L635.5,677.0 L637.0,678.5 L638.5,680.0 L640.0,681.6 L641.5,683.1 L643.0,684.6 L644.5,686.2 L646.0,687.7 L647.5,689.3 L649.0,690.9 L650.5,692.4 L652.0,694.0 L653.5,695.6 L655.0,697.2 L656.5,698.8 L658.0,700.4 L659.5,701.9 L661.0,703.5 L662.5,705.1 L664.0,706.7 L665.5,708.3 L667.0,709.9 L668.5,711.5 L670.0,713.1 L671.5,714.6 L673.0,716.2 L674.5,717.8 L676.0,719.3 L677.5,720.9 L679.0,722.5 L680.5,724.0 L682.0,725.5 L683.5,727.1 L685.0,728.6 L686.5,730.1 L688.0,731.6 L689.5,733.1 L691.0,734.5 L692.5,736.0 L694.0,737.5 L695.5,738.9 L697.0,740.3 L698.5,741.7 L700.0,743.1 L701.5,744.5 L703.0,745.8 L704.5,747.2 L706.0,748.5 L707.5,749.8 L709.0,751.1 L710.5,752.4 L712.0,753.6 L713.5,754.9 L715.0,756.1 L716.5,757.3 L718.0,758.4 L719.5,759.6 L721.0,760.7 L722.5,761.8 L724.0,762.9 L725.5,763.9 L727.0,765.0 L728.5,766.0 L730.0,767.0 L731.5,767.9 L733.0,768.8 L734.5,769.7 L736.0,770.6 L737.5,771.5 L739.0,772.3 L740.5,773.1 L742.0,773.9 L743.5,774.6 L745.0,775.3 L746.5,776.0 L748.0,776.6 L749.5,777.3 L751.0,777.9 L752.5,778.4 L754.0,779.0 L755.5,779.5 L757.0,779.9 L758.5,780.4 L760.0,780.8 L761.5,781.2 L763.0,781.5 L764.5,781.9 L766.0,782.2 L767.5,782.4 L769.0,782.6 L770.5,782.8 L772.0,783.0 L773.5,783.1 L775.0,783.2 L776.5,783.3 L778.0,783.3 L779.5,783.3 L781.0,783.3 L782.5,783.2 L784.0,783.2 L785.5,783.0 L787.0,782.9 L788.5,782.7 L790.0,782.5 L791.5,782.2 L793.0,781.9 L794.5,781.6 L796.0,781.3 L797.5,780.9 L799.0,780.5 L800.5,780.1 L802.0,779.6 L803.5,779.1 L805.0,778.6 L806.5,778.0 L808.0,777.4 L809.5,776.8 L811.0,776.2 L812.5,775.5 L814.0,774.8 L815.5,774.0 L817.0,773.3 L818.5,772.5 L820.0,771.7 L821.5,770.8 L823.0,770.0 L824.5,769.1 L826.0,768.1 L827.5,767.2 L829.0,766.2 L830.5,765.2 L832.0,764.2 L833.5,763.2 L835.0,762.1 L836.5,761.0 L838.0,759.9 L839.5,758.7 L841.0,757.6 L842.5,756.4 L844.0,755.2 L845.5,753.9 L847.0,752.7 L848.5,751.4 L850.0,750.1 L851.5,748.8 L853.0,747.5 L854.5,746.2 L856.0,744.8 L857.5,743.5 L859.0,742.1 L860.5,740.7 L862.0,739.2 L863.5,737.8 L865.0,736.4 L866.5,734.9 L868.0,733.4 L869.5,732.0 L871.0,730.5 L872.5,729.0 L874.0,727.4 L875.5,725.9 L877.0,724.4 L878.5,722.8 L880.0,721.3 L881.5,719.7 L883.0,718.2 L884.5,716.6 L886.0,715.0 L887.5,713.5 L889.0,711.9 L890.5,710.3 L892.0,708.7 L893.5,707.1 L895.0,705.5 L896.5,703.9 L898.0,702.3 L899.5,700.8 L901.0,699.2 L902.5,697.6 L904.0,696.0 L905.5,694.4 L907.0,692.8 L908.5,691.3 L910.0,689.7 L911.5,688.1 L913.0,686.6 L914.5,685.0 L916.0,683.5 L917.5,682.0 L919.0,680.4 L920.5,678.9 L922.0,677.4 L923.5,675.9 L925.0,674.4 L926.5,673.0 L928.0,671.5 L929.5,670.1 L931.0,668.6 L932.5,667.2 L934.0,665.8 L935.5,664.4 L937.0,663.1 L938.5,661.7 L940.0,660.4 L941.5,659.0 L943.0,657.7 L944.5,656.5 L946.0,655.2 L947.5,654.0 L949.0,652.7 L950.5,651.5 L952.0,650.3 L953.5,649.2 L955.0,648.0 L956.5,646.9 L958.0,645.8 L959.5,644.8 L961.0,643.7 L962.5,642.7 L964.0,641.7 L965.5,640.7 L967.0,639.8 L968.5,638.9 L970.0,638.0 L971.5,637.1 L973.0,636.3 L974.5,635.4 L976.0,634.7 L977.5,633.9 L979.0,633.2 L980.5,632.5 L982.0,631.8 L983.5,631.1 L985.0,630.5 L986.5,629.9 L988.0,629.4 L989.5,628.9 L991.0,628.4 L992.5,627.9 L994.0,627.5 L995.5,627.1 L997.0,626.7 L998.5,626.3 L1000.0,626.0 L1001.5,625.8 L1003.0,625.5 L1004.5,625.3 L1006.0,625.1 L1007.5,625.0 L1009.0,624.8 L1010.5,624.7 L1012.0,624.7 L1013.5,624.7 L1015.0,624.7 L1016.5,624.7 L1018.0,624.8 L1019.5,624.9 L1021.0,625.0 L1022.5,625.2 L1024.0,625.4 L1025.5,625.6 L1027.0,625.9 L1028.5,626.2 L1030.0,626.5 L1031.5,626.8 L1033.0,627.2 L1034.5,627.6 L1036.0,628.1 L1037.5,628.6 L1039.0,629.1 L1040.5,629.6 L1042.0,630.2 L1043.5,630.8 L1045.0,631.4 L1046.5,632.1 L1048.0,632.7 L1049.5,633.5 L1051.0,634.2 L1052.5,635.0 L1054.0,635.8 L1055.5,636.6 L1057.0,637.5 L1058.5,638.3 L1060.0,639.2 L1061.5,640.2 L1063.0,641.1 L1064.5,642.1 L1066.0,643.1 L1067.5,644.1 L1069.0,645.2 L1070.5,646.3 L1072.0,647.4 L1073.5,648.5 L1075.0,649.7 L1076.5,650.8 L1078.0,652.0 L1079.5,653.2 L1081.0,654.5 L1082.5,655.7 L1084.0,657.0 L1085.5,658.3 L1087.0,659.6 L1088.5,660.9 L1090.0,662.3 L1091.5,663.6 L1093.0,665.0 L1094.5,666.4 L1096.0,667.8 L1097.5,669.2 L1099.0,670.7 L1100.5,672.1 L1102.0,673.6 L1103.5,675.1 L1105.0,676.5 L1106.5,678.0 L1108.0,679.5 L1109.5,681.1 L1111.0,682.6 L1112.5,684.1 L1114.0,685.7 L1115.5,687.2 L1117.0,688.8 L1118.5,690.3 L1120.0,691.9 L1121.5,693.5 L1123.0,695.1 L1124.5,696.7 L1126.0,698.2 L1127.5,699.8 L1129.0,701.4 L1130.5,703.0 L1132.0,704.6 L1133.5,706.2 L1135.0,707.8 L1136.5,709.4 L1138.0,710.9 L1139.5,712.5 L1141.0,714.1 L1142.5,715.7 L1144.0,717.3 L1145.5,718.8 L1147.0,720.4 L1148.5,721.9 L1150.0,723.5 L1151.5,725.0 L1153.0,726.6 L1154.5,728.1 L1156.0,729.6 L1157.5,731.1 L1159.0,732.6 L1160.5,734.1 L1162.0,735.5 L1163.5,737.0 L1165.0,738.4 L1166.5,739.8 L1168.0,741.2 L1169.5,742.6 L1171.0,744.0 L1172.5,745.4 L1174.0,746.7 L1175.5,748.1 L1177.0,749.4 L1178.5,750.7 L1180.0,752.0 L1181.5,753.2 L1183.0,754.5 L1184.5,755.7 L1186.0,756.9 L1187.5,758.0 L1189.0,759.2 L1190.5,760.3 L1192.0,761.4 L1193.5,762.5 L1195.0,763.6 L1196.5,764.6 L1198.0,765.6 L1199.5,766.6 L1201.0,767.6 L1202.5,768.5 L1204.0,769.4 L1205.5,770.3 L1207.0,771.2 L1208.5,772.0 L1210.0,772.8 L1211.5,773.6 L1213.0,774.4 L1214.5,775.1 L1216.0,775.8 L1217.5,776.4 L1219.0,777.1 L1220.5,777.7 L1222.0,778.2 L1223.5,778.8 L1225.0,779.3 L1226.5,779.8 L1228.0,780.2 L1229.5,780.7 L1231.0,781.1 L1232.5,781.4 L1234.0,781.8 L1235.5,782.1 L1237.0,782.3 L1238.5,782.6 L1240.0,782.8 L1241.5,782.9 L1243.0,783.1 L1244.5,783.2 L1246.0,783.3 L1247.5,783.3" stroke="#30D8F0" stroke-width="2.2" fill="none"/>
<path d="M426.8,703.8 L428.3,698.2 L429.8,692.8 L431.3,687.5 L432.8,682.3 L434.3,677.3 L435.8,672.3 L437.3,667.6 L438.8,662.9 L440.3,658.3 L441.8,653.9 L443.3,649.6 L444.8,645.4 L446.3,641.3 L447.8,637.3 L449.3,633.4 L450.8,629.6 L452.3,625.9 L453.8,622.3 L455.3,618.8 L456.8,615.4 L458.3,612.1 L459.8,608.9 L461.3,605.7 L462.8,602.7 L464.3,599.7 L465.8,596.8 L467.3,594.0 L468.8,591.3 L470.3,588.7 L471.8,586.2 L473.3,583.7 L474.8,581.3 L476.3,579.0 L477.8,576.8 L479.3,574.6 L480.8,572.6 L482.3,570.6 L483.8,568.7 L485.3,566.9 L486.8,565.1 L488.3,563.4 L489.8,561.8 L491.3,560.3 L492.8,558.8 L494.3,557.5 L495.8,556.2 L497.3,554.9 L498.8,553.8 L500.3,552.7 L501.8,551.7 L503.3,550.7 L504.8,549.9 L506.3,549.1 L507.8,548.4 L509.3,547.7 L510.8,547.2 L512.3,546.7 L513.8,546.2 L515.3,545.9 L516.8,545.6 L518.3,545.4 L519.8,545.2 L521.3,545.2 L522.8,545.2 L524.3,545.2 L525.8,545.4 L527.3,545.6 L528.8,545.8 L530.3,546.2 L531.8,546.6 L533.3,547.0 L534.8,547.6 L536.3,548.2 L537.8,548.9 L539.3,549.6 L540.8,550.4 L542.3,551.3 L543.8,552.2 L545.3,553.2 L546.8,554.3 L548.3,555.4 L549.8,556.5 L551.3,557.8 L552.8,559.1 L554.3,560.5 L555.8,561.9 L557.3,563.4 L558.8,564.9 L560.3,566.5 L561.8,568.1 L563.3,569.8 L564.8,571.6 L566.3,573.4 L567.8,575.3 L569.3,577.2 L570.8,579.2 L572.3,581.2 L573.8,583.2 L575.3,585.4 L576.8,587.5 L578.3,589.7 L579.8,592.0 L581.3,594.3 L582.8,596.7 L584.3,599.0 L585.8,601.5 L587.3,603.9 L588.8,606.5 L590.3,609.0 L591.8,611.6 L593.3,614.2 L594.8,616.9 L596.3,619.6 L597.8,622.3 L599.3,625.1 L600.8,627.9 L602.3,630.7 L603.8,633.6 L605.3,636.4 L606.8,639.3 L608.3,642.3 L609.8,645.2 L611.3,648.2 L612.8,651.2 L614.3,654.2 L615.8,657.3 L617.3,660.3 L618.8,663.4 L620.3,666.5 L621.8,669.6 L623.3,672.7 L624.8,675.9 L626.3,679.0 L627.8,682.2 L629.3,685.3 L630.8,688.5 L632.3,691.7 L633.8,694.8 L635.3,698.0 L636.8,701.2 L638.3,704.4 L639.8,707.5 L641.3,710.7 L642.8,713.9 L644.3,717.1 L645.8,720.2 L647.3,723.4 L648.8,726.5 L650.3,729.6 L651.8,732.8 L653.3,735.9 L654.8,739.0 L656.3,742.1 L657.8,745.1 L659.3,748.2 L660.8,751.2 L662.3,754.2 L663.8,757.2 L665.3,760.2 L666.8,763.1 L668.3,766.0 L669.8,768.9 L671.3,771.8 L672.8,774.6 L674.3,777.4 L675.8,780.2 L677.3,782.9 L678.8,785.6 L680.3,788.3 L681.8,791.0 L683.3,793.6 L684.8,796.1 L686.3,798.7 L687.8,801.2 L689.3,803.6 L690.8,806.0 L692.3,808.4 L693.8,810.7 L695.3,813.0 L696.8,815.2 L698.3,817.4 L699.8,819.6 L701.3,821.7 L702.8,823.7 L704.3,825.7 L705.8,827.7 L707.3,829.6 L708.8,831.4 L710.3,833.2 L711.8,835.0 L713.3,836.6 L714.8,838.3 L716.3,839.9 L717.8,841.4 L719.3,842.8 L720.8,844.3 L722.3,845.6 L723.8,846.9 L725.3,848.1 L726.8,849.3 L728.3,850.4 L729.8,851.5 L731.3,852.5 L732.8,853.4 L734.3,854.3 L735.8,855.1 L737.3,855.9 L738.8,856.6 L740.3,857.2 L741.8,857.7 L743.3,858.2 L744.8,858.7 L746.3,859.1 L747.8,859.4 L749.3,859.6 L750.8,859.8 L752.3,859.9 L753.8,860.0 L755.3,860.0 L756.8,859.9 L758.3,859.8 L759.8,859.6 L761.3,859.3 L762.8,859.0 L764.3,858.6 L765.8,858.1 L767.3,857.6 L768.8,857.1 L770.3,856.4 L771.8,855.7 L773.3,854.9 L774.8,854.1 L776.3,853.2 L777.8,852.3 L779.3,851.3 L780.8,850.2 L782.3,849.1 L783.8,847.9 L785.3,846.6 L786.8,845.3 L788.3,844.0 L789.8,842.5 L791.3,841.1 L792.8,839.5 L794.3,837.9 L795.8,836.3 L797.3,834.6 L798.8,832.8 L800.3,831.0 L801.8,829.2 L803.3,827.3 L804.8,825.3 L806.3,823.3 L807.8,821.2 L809.3,819.1 L810.8,817.0 L812.3,814.8 L813.8,812.5 L815.3,810.2 L816.8,807.9 L818.3,805.5 L819.8,803.1 L821.3,800.6 L822.8,798.1 L824.3,795.6 L825.8,793.0 L827.3,790.4 L828.8,787.7 L830.3,785.1 L831.8,782.3 L833.3,779.6 L834.8,776.8 L836.3,774.0 L837.8,771.1 L839.3,768.3 L840.8,765.4 L842.3,762.5 L843.8,759.5 L845.3,756.5 L846.8,753.5 L848.3,750.5 L849.8,747.5 L851.3,744.4 L852.8,741.4 L854.3,738.3 L855.8,735.2 L857.3,732.1 L858.8,728.9 L860.3,725.8 L861.8,722.7 L863.3,719.5 L864.8,716.3 L866.3,713.2 L867.8,710.0 L869.3,706.8 L870.8,703.6 L872.3,700.4 L873.8,697.3 L875.3,694.1 L876.8,690.9 L878.3,687.7 L879.8,684.6 L881.3,681.4 L882.8,678.3 L884.3,675.1 L885.8,672.0 L887.3,668.9 L888.8,665.8 L890.3,662.7 L891.8,659.6 L893.3,656.5 L894.8,653.5 L896.3,650.5 L897.8,647.4 L899.3,644.5 L900.8,641.5 L902.3,638.6 L903.8,635.7 L905.3,632.8 L906.8,629.9 L908.3,627.1 L909.8,624.3 L911.3,621.5 L912.8,618.8 L914.3,616.1 L915.8,613.4 L917.3,610.8 L918.8,608.2 L920.3,605.6 L921.8,603.1 L923.3,600.7 L924.8,598.2 L926.3,595.8 L927.8,593.5 L929.3,591.1 L930.8,588.9 L932.3,586.7 L933.8,584.5 L935.3,582.4 L936.8,580.3 L938.3,578.2 L939.8,576.3 L941.3,574.3 L942.8,572.4 L944.3,570.6 L945.8,568.8 L947.3,567.1 L948.8,565.4 L950.3,563.8 L951.8,562.3 L953.3,560.8 L954.8,559.3 L956.3,557.9 L957.8,556.6 L959.3,555.3 L960.8,554.1 L962.3,552.9 L963.8,551.8 L965.3,550.8 L966.8,549.8 L968.3,548.9 L969.8,548.1 L971.3,547.3 L972.8,546.5 L974.3,545.9 L975.8,545.3 L977.3,544.7 L978.8,544.2 L980.3,543.8 L981.8,543.5 L983.3,543.2 L984.8,542.9 L986.3,542.8 L987.8,542.7 L989.3,542.6 L990.8,542.7 L992.3,542.8 L993.8,542.9 L995.3,543.1 L996.8,543.4 L998.3,543.8 L999.8,544.2 L1001.3,544.7 L1002.8,545.2 L1004.3,545.8 L1005.8,546.4 L1007.3,547.2 L1008.8,548.0 L1010.3,548.8 L1011.8,549.7 L1013.3,550.7 L1014.8,551.7 L1016.3,552.8 L1017.8,554.0 L1019.3,555.2 L1020.8,556.4 L1022.3,557.8 L1023.8,559.1 L1025.3,560.6 L1026.8,562.1 L1028.3,563.6 L1029.8,565.2 L1031.3,566.9 L1032.8,568.6 L1034.3,570.4 L1035.8,572.2 L1037.3,574.1 L1038.8,576.0 L1040.3,578.0 L1041.8,580.0 L1043.3,582.1 L1044.8,584.2 L1046.3,586.4 L1047.8,588.6 L1049.3,590.9 L1050.8,593.2 L1052.3,595.5 L1053.8,597.9 L1055.3,600.4 L1056.8,602.8 L1058.3,605.3 L1059.8,607.9 L1061.3,610.5 L1062.8,613.1 L1064.3,615.8 L1065.8,618.5 L1067.3,621.2 L1068.8,624.0 L1070.3,626.8 L1071.8,629.6 L1073.3,632.4 L1074.8,635.3 L1076.3,638.2 L1077.8,641.2 L1079.3,644.1 L1080.8,647.1 L1082.3,650.1 L1083.8,653.1 L1085.3,656.2 L1086.8,659.2 L1088.3,662.3 L1089.8,665.4 L1091.3,668.5 L1092.8,671.6 L1094.3,674.7 L1095.8,677.9 L1097.3,681.0 L1098.8,684.2 L1100.3,687.4 L1101.8,690.5 L1103.3,693.7 L1104.8,696.9 L1106.3,700.1 L1107.8,703.2 L1109.3,706.4 L1110.8,709.6 L1112.3,712.8 L1113.8,716.0 L1115.3,719.1 L1116.8,722.3 L1118.3,725.4 L1119.8,728.6 L1121.3,731.7 L1122.8,734.8 L1124.3,737.9 L1125.8,741.0 L1127.3,744.1 L1128.8,747.1 L1130.3,750.2 L1131.8,753.2 L1133.3,756.2 L1134.8,759.2 L1136.3,762.1 L1137.8,765.0 L1139.3,767.9 L1140.8,770.8 L1142.3,773.7 L1143.8,776.5 L1145.3,779.3 L1146.8,782.0 L1148.3,784.7 L1149.8,787.4 L1151.3,790.1 L1152.8,792.7 L1154.3,795.3 L1155.8,797.8 L1157.3,800.3 L1158.8,802.8 L1160.3,805.2 L1161.8,807.6 L1163.3,809.9 L1164.8,812.2 L1166.3,814.5 L1167.8,816.7 L1169.3,818.9 L1170.8,821.0 L1172.3,823.0 L1173.8,825.1 L1175.3,827.0 L1176.8,828.9 L1178.3,830.8 L1179.8,832.6 L1181.3,834.4 L1182.8,836.1 L1184.3,837.7 L1185.8,839.3 L1187.3,840.9 L1188.8,842.4 L1190.3,843.8 L1191.8,845.2 L1193.3,846.5 L1194.8,847.7 L1196.3,848.9 L1197.8,850.1 L1199.3,851.1 L1200.8,852.2 L1202.3,853.1 L1203.8,854.0 L1205.3,854.8 L1206.8,855.6 L1208.3,856.3 L1209.8,857.0 L1211.3,857.6 L1212.8,858.1 L1214.3,858.5 L1215.8,858.9 L1217.3,859.3 L1218.8,859.5 L1220.3,859.7 L1221.8,859.9 L1223.3,860.0 L1224.8,860.0 L1226.3,859.9 L1227.8,859.8 L1229.3,859.6 L1230.8,859.4 L1232.3,859.1 L1233.8,858.7 L1235.3,858.3 L1236.8,857.8 L1238.3,857.2 L1239.8,856.6 L1241.3,855.9 L1242.8,855.2 L1244.3,854.4 L1245.8,853.5 L1247.3,852.6 L1248.8,851.6" stroke="#E040E0" stroke-width="1.3" fill="none"/>
<path d="M425.5,703.3 L427.0,697.7 L428.5,692.3 L430.0,687.0 L431.5,681.8 L433.0,676.8 L434.5,671.8 L436.0,667.1 L437.5,662.4 L439.0,657.8 L440.5,653.4 L442.0,649.1 L443.5,644.9 L445.0,640.8 L446.5,636.8 L448.0,632.9 L449.5,629.1 L451.0,625.4 L452.5,621.8 L454.0,618.3 L455.5,614.9 L457.0,611.6 L458.5,608.4 L460.0,605.2 L461.5,602.2 L463.0,599.2 L464.5,596.3 L466.0,593.5 L467.5,590.8 L469.0,588.2 L470.5,585.7 L472.0,583.2 L473.5,580.8 L475.0,578.5 L476.5,576.3 L478.0,574.1 L479.5,572.1 L481.0,570.1 L482.5,568.2 L484.0,566.4 L485.5,564.6 L487.0,562.9 L488.5,561.3 L490.0,559.8 L491.5,558.3 L493.0,557.0 L494.5,555.7 L496.0,554.4 L497.5,553.3 L499.0,552.2 L500.5,551.2 L502.0,550.2 L503.5,549.4 L505.0,548.6 L506.5,547.9 L508.0,547.2 L509.5,546.7 L511.0,546.2 L512.5,545.7 L514.0,545.4 L515.5,545.1 L517.0,544.9 L518.5,544.7 L520.0,544.7 L521.5,544.7 L523.0,544.7 L524.5,544.9 L526.0,545.1 L527.5,545.3 L529.0,545.7 L530.5,546.1 L532.0,546.5 L533.5,547.1 L535.0,547.7 L536.5,548.4 L538.0,549.1 L539.5,549.9 L541.0,550.8 L542.5,551.7 L544.0,552.7 L545.5,553.8 L547.0,554.9 L548.5,556.0 L550.0,557.3 L551.5,558.6 L553.0,560.0 L554.5,561.4 L556.0,562.9 L557.5,564.4 L559.0,566.0 L560.5,567.6 L562.0,569.3 L563.5,571.1 L565.0,572.9 L566.5,574.8 L568.0,576.7 L569.5,578.7 L571.0,580.7 L572.5,582.7 L574.0,584.9 L575.5,587.0 L577.0,589.2 L578.5,591.5 L580.0,593.8 L581.5,596.2 L583.0,598.5 L584.5,601.0 L586.0,603.4 L587.5,606.0 L589.0,608.5 L590.5,611.1 L592.0,613.7 L593.5,616.4 L595.0,619.1 L596.5,621.8 L598.0,624.6 L599.5,627.4 L601.0,630.2 L602.5,633.1 L604.0,635.9 L605.5,638.8 L607.0,641.8 L608.5,644.7 L610.0,647.7 L611.5,650.7 L613.0,653.7 L614.5,656.8 L616.0,659.8 L617.5,662.9 L619.0,666.0 L620.5,669.1 L622.0,672.2 L623.5,675.4 L625.0,678.5 L626.5,681.7 L628.0,684.8 L629.5,688.0 L631.0,691.2 L632.5,694.3 L634.0,697.5 L635.5,700.7 L637.0,703.9 L638.5,707.0 L640.0,710.2 L641.5,713.4 L643.0,716.6 L644.5,719.7 L646.0,722.9 L647.5,726.0 L649.0,729.1 L650.5,732.3 L652.0,735.4 L653.5,738.5 L655.0,741.6 L656.5,744.6 L658.0,747.7 L659.5,750.7 L661.0,753.7 L662.5,756.7 L664.0,759.7 L665.5,762.6 L667.0,765.5 L668.5,768.4 L670.0,771.3 L671.5,774.1 L673.0,776.9 L674.5,779.7 L676.0,782.4 L677.5,785.1 L679.0,787.8 L680.5,790.5 L682.0,793.1 L683.5,795.6 L685.0,798.2 L686.5,800.7 L688.0,803.1 L689.5,805.5 L691.0,807.9 L692.5,810.2 L694.0,812.5 L695.5,814.7 L697.0,816.9 L698.5,819.1 L700.0,821.2 L701.5,823.2 L703.0,825.2 L704.5,827.2 L706.0,829.1 L707.5,830.9 L709.0,832.7 L710.5,834.5 L712.0,836.1 L713.5,837.8 L715.0,839.4 L716.5,840.9 L718.0,842.3 L719.5,843.8 L721.0,845.1 L722.5,846.4 L724.0,847.6 L725.5,848.8 L727.0,849.9 L728.5,851.0 L730.0,852.0 L731.5,852.9 L733.0,853.8 L734.5,854.6 L736.0,855.4 L737.5,856.1 L739.0,856.7 L740.5,857.2 L742.0,857.7 L743.5,858.2 L745.0,858.6 L746.5,858.9 L748.0,859.1 L749.5,859.3 L751.0,859.4 L752.5,859.5 L754.0,859.5 L755.5,859.4 L757.0,859.3 L758.5,859.1 L760.0,858.8 L761.5,858.5 L763.0,858.1 L764.5,857.6 L766.0,857.1 L767.5,856.6 L769.0,855.9 L770.5,855.2 L772.0,854.4 L773.5,853.6 L775.0,852.7 L776.5,851.8 L778.0,850.8 L779.5,849.7 L781.0,848.6 L782.5,847.4 L784.0,846.1 L785.5,844.8 L787.0,843.5 L788.5,842.0 L790.0,840.6 L791.5,839.0 L793.0,837.4 L794.5,835.8 L796.0,834.1 L797.5,832.3 L799.0,830.5 L800.5,828.7 L802.0,826.8 L803.5,824.8 L805.0,822.8 L806.5,820.7 L808.0,818.6 L809.5,816.5 L811.0,814.3 L812.5,812.0 L814.0,809.7 L815.5,807.4 L817.0,805.0 L818.5,802.6 L820.0,800.1 L821.5,797.6 L823.0,795.1 L824.5,792.5 L826.0,789.9 L827.5,787.2 L829.0,784.6 L830.5,781.8 L832.0,779.1 L833.5,776.3 L835.0,773.5 L836.5,770.6 L838.0,767.8 L839.5,764.9 L841.0,762.0 L842.5,759.0 L844.0,756.0 L845.5,753.0 L847.0,750.0 L848.5,747.0 L850.0,743.9 L851.5,740.9 L853.0,737.8 L854.5,734.7 L856.0,731.6 L857.5,728.4 L859.0,725.3 L860.5,722.2 L862.0,719.0 L863.5,715.8 L865.0,712.7 L866.5,709.5 L868.0,706.3 L869.5,703.1 L871.0,699.9 L872.5,696.8 L874.0,693.6 L875.5,690.4 L877.0,687.2 L878.5,684.1 L880.0,680.9 L881.5,677.8 L883.0,674.6 L884.5,671.5 L886.0,668.4 L887.5,665.3 L889.0,662.2 L890.5,659.1 L892.0,656.0 L893.5,653.0 L895.0,650.0 L896.5,646.9 L898.0,644.0 L899.5,641.0 L901.0,638.1 L902.5,635.2 L904.0,632.3 L905.5,629.4 L907.0,626.6 L908.5,623.8 L910.0,621.0 L911.5,618.3 L913.0,615.6 L914.5,612.9 L916.0,610.3 L917.5,607.7 L919.0,605.1 L920.5,602.6 L922.0,600.2 L923.5,597.7 L925.0,595.3 L926.5,593.0 L928.0,590.6 L929.5,588.4 L931.0,586.2 L932.5,584.0 L934.0,581.9 L935.5,579.8 L937.0,577.7 L938.5,575.8 L940.0,573.8 L941.5,571.9 L943.0,570.1 L944.5,568.3 L946.0,566.6 L947.5,564.9 L949.0,563.3 L950.5,561.8 L952.0,560.3 L953.5,558.8 L955.0,557.4 L956.5,556.1 L958.0,554.8 L959.5,553.6 L961.0,552.4 L962.5,551.3 L964.0,550.3 L965.5,549.3 L967.0,548.4 L968.5,547.6 L970.0,546.8 L971.5,546.0 L973.0,545.4 L974.5,544.8 L976.0,544.2 L977.5,543.7 L979.0,543.3 L980.5,543.0 L982.0,542.7 L983.5,542.4 L985.0,542.3 L986.5,542.2 L988.0,542.1 L989.5,542.2 L991.0,542.3 L992.5,542.4 L994.0,542.6 L995.5,542.9 L997.0,543.3 L998.5,543.7 L1000.0,544.2 L1001.5,544.7 L1003.0,545.3 L1004.5,545.9 L1006.0,546.7 L1007.5,547.5 L1009.0,548.3 L1010.5,549.2 L1012.0,550.2 L1013.5,551.2 L1015.0,552.3 L1016.5,553.5 L1018.0,554.7 L1019.5,555.9 L1021.0,557.3 L1022.5,558.6 L1024.0,560.1 L1025.5,561.6 L1027.0,563.1 L1028.5,564.7 L1030.0,566.4 L1031.5,568.1 L1033.0,569.9 L1034.5,571.7 L1036.0,573.6 L1037.5,575.5 L1039.0,577.5 L1040.5,579.5 L1042.0,581.6 L1043.5,583.7 L1045.0,585.9 L1046.5,588.1 L1048.0,590.4 L1049.5,592.7 L1051.0,595.0 L1052.5,597.4 L1054.0,599.9 L1055.5,602.3 L1057.0,604.8 L1058.5,607.4 L1060.0,610.0 L1061.5,612.6 L1063.0,615.3 L1064.5,618.0 L1066.0,620.7 L1067.5,623.5 L1069.0,626.3 L1070.5,629.1 L1072.0,631.9 L1073.5,634.8 L1075.0,637.7 L1076.5,640.7 L1078.0,643.6 L1079.5,646.6 L1081.0,649.6 L1082.5,652.6 L1084.0,655.7 L1085.5,658.7 L1087.0,661.8 L1088.5,664.9 L1090.0,668.0 L1091.5,671.1 L1093.0,674.2 L1094.5,677.4 L1096.0,680.5 L1097.5,683.7 L1099.0,686.9 L1100.5,690.0 L1102.0,693.2 L1103.5,696.4 L1105.0,699.6 L1106.5,702.7 L1108.0,705.9 L1109.5,709.1 L1111.0,712.3 L1112.5,715.5 L1114.0,718.6 L1115.5,721.8 L1117.0,724.9 L1118.5,728.1 L1120.0,731.2 L1121.5,734.3 L1123.0,737.4 L1124.5,740.5 L1126.0,743.6 L1127.5,746.6 L1129.0,749.7 L1130.5,752.7 L1132.0,755.7 L1133.5,758.7 L1135.0,761.6 L1136.5,764.5 L1138.0,767.4 L1139.5,770.3 L1141.0,773.2 L1142.5,776.0 L1144.0,778.8 L1145.5,781.5 L1147.0,784.2 L1148.5,786.9 L1150.0,789.6 L1151.5,792.2 L1153.0,794.8 L1154.5,797.3 L1156.0,799.8 L1157.5,802.3 L1159.0,804.7 L1160.5,807.1 L1162.0,809.4 L1163.5,811.7 L1165.0,814.0 L1166.5,816.2 L1168.0,818.4 L1169.5,820.5 L1171.0,822.5 L1172.5,824.6 L1174.0,826.5 L1175.5,828.4 L1177.0,830.3 L1178.5,832.1 L1180.0,833.9 L1181.5,835.6 L1183.0,837.2 L1184.5,838.8 L1186.0,840.4 L1187.5,841.9 L1189.0,843.3 L1190.5,844.7 L1192.0,846.0 L1193.5,847.2 L1195.0,848.4 L1196.5,849.6 L1198.0,850.6 L1199.5,851.7 L1201.0,852.6 L1202.5,853.5 L1204.0,854.3 L1205.5,855.1 L1207.0,855.8 L1208.5,856.5 L1210.0,857.1 L1211.5,857.6 L1213.0,858.0 L1214.5,858.4 L1216.0,858.8 L1217.5,859.0 L1219.0,859.2 L1220.5,859.4 L1222.0,859.5 L1223.5,859.5 L1225.0,859.4 L1226.5,859.3 L1228.0,859.1 L1229.5,858.9 L1231.0,858.6 L1232.5,858.2 L1234.0,857.8 L1235.5,857.3 L1237.0,856.7 L1238.5,856.1 L1240.0,855.4 L1241.5,854.7 L1243.0,853.9 L1244.5,853.0 L1246.0,852.1 L1247.5,851.1" stroke="#FFF040" stroke-width="2" fill="none"/>
<path d="M425.5,704.0 L427.0,704.0 L428.5,704.0 L430.0,704.0 L431.5,704.0 L433.0,704.0 L434.5,704.0 L436.0,704.0 L437.5,704.0 L439.0,704.0 L440.5,703.9 L442.0,703.0 L443.5,701.9 L445.0,700.6 L446.5,699.3 L448.0,697.8 L449.5,696.3 L451.0,694.6 L452.5,692.9 L454.0,691.0 L455.5,689.1 L457.0,687.1 L458.5,685.1 L460.0,683.0 L461.5,680.8 L463.0,678.5 L464.5,676.2 L466.0,673.9 L467.5,671.5 L469.0,669.1 L470.5,666.7 L472.0,664.2 L473.5,661.7 L475.0,659.1 L476.5,656.6 L478.0,654.0 L479.5,651.4 L481.0,648.8 L482.5,646.1 L484.0,643.5 L485.5,640.9 L487.0,638.2 L488.5,635.6 L490.0,633.0 L491.5,630.4 L493.0,627.7 L494.5,625.1 L496.0,622.5 L497.5,620.0 L499.0,617.4 L500.5,614.8 L502.0,612.3 L503.5,609.8 L505.0,607.3 L506.5,604.9 L508.0,602.5 L509.5,600.1 L511.0,597.7 L512.5,595.4 L514.0,593.1 L515.5,590.8 L517.0,588.6 L518.5,586.4 L520.0,584.2 L521.5,582.1 L523.0,580.1 L524.5,578.1 L526.0,576.1 L527.5,574.2 L529.0,572.3 L530.5,570.5 L532.0,568.7 L533.5,566.9 L535.0,565.3 L536.5,563.6 L538.0,562.1 L539.5,560.6 L541.0,559.1 L542.5,557.7 L544.0,556.3 L545.5,555.1 L547.0,553.8 L548.5,552.6 L550.0,551.5 L551.5,550.5 L553.0,549.5 L554.5,548.6 L556.0,547.7 L557.5,546.9 L559.0,546.1 L560.5,545.5 L562.0,544.9 L563.5,544.3 L565.0,543.8 L566.5,543.4 L568.0,543.0 L569.5,542.7 L571.0,542.5 L572.5,542.4 L574.0,542.3 L575.5,542.2 L577.0,542.3 L578.5,542.4 L580.0,542.5 L581.5,542.8 L583.0,543.1 L584.5,543.5 L586.0,543.9 L587.5,544.4 L589.0,545.0 L590.5,545.6 L592.0,546.3 L593.5,547.0 L595.0,547.9 L596.5,548.8 L598.0,549.7 L599.5,550.7 L601.0,551.8 L602.5,553.0 L604.0,554.2 L605.5,555.4 L607.0,556.8 L608.5,558.2 L610.0,559.6 L611.5,561.1 L613.0,562.7 L614.5,564.3 L616.0,566.0 L617.5,567.8 L619.0,569.6 L620.5,571.4 L622.0,573.3 L623.5,575.3 L625.0,577.3 L626.5,579.4 L628.0,581.5 L629.5,583.7 L631.0,585.9 L632.5,588.2 L634.0,590.6 L635.5,592.9 L637.0,595.4 L638.5,597.8 L640.0,600.3 L641.5,602.9 L643.0,605.5 L644.5,608.1 L646.0,610.8 L647.5,613.5 L649.0,616.3 L650.5,619.1 L652.0,621.9 L653.5,624.8 L655.0,627.7 L656.5,630.7 L658.0,633.6 L659.5,636.6 L661.0,639.7 L662.5,642.7 L664.0,645.8 L665.5,648.9 L667.0,652.0 L668.5,655.2 L670.0,658.4 L671.5,661.6 L673.0,664.8 L674.5,668.0 L676.0,671.3 L677.5,674.6 L679.0,677.8 L680.5,681.1 L682.0,684.4 L683.5,687.8 L685.0,691.1 L686.5,694.4 L688.0,697.8 L689.5,701.1 L691.0,704.5 L692.5,707.8 L694.0,711.2 L695.5,714.5 L697.0,717.9 L698.5,721.2 L700.0,724.6 L701.5,727.9 L703.0,731.2 L704.5,734.5 L706.0,737.9 L707.5,741.2 L709.0,744.4 L710.5,747.7 L712.0,751.0 L713.5,754.2 L715.0,757.4 L716.5,760.6 L718.0,763.8 L719.5,767.0 L721.0,770.1 L722.5,773.2 L724.0,776.3 L725.5,779.4 L727.0,782.4 L728.5,785.4 L730.0,788.4 L731.5,791.3 L733.0,794.3 L734.5,797.1 L736.0,800.0 L737.5,802.8 L739.0,805.5 L740.5,808.3 L742.0,811.0 L743.5,813.6 L745.0,816.2 L746.5,818.8 L748.0,821.3 L749.5,823.8 L751.0,826.2 L752.5,828.6 L754.0,830.9 L755.5,833.2 L757.0,835.4 L758.5,837.6 L760.0,839.8 L761.5,841.9 L763.0,843.9 L764.5,845.9 L766.0,847.8 L767.5,849.6 L769.0,851.5 L770.5,853.2 L772.0,854.9 L773.5,856.5 L775.0,858.1 L776.5,859.6 L778.0,861.1 L779.5,862.5 L781.0,863.8 L782.5,865.1 L784.0,866.3 L785.5,867.5 L787.0,868.5 L788.5,869.6 L790.0,870.5 L791.5,871.4 L793.0,872.2 L794.5,873.0 L796.0,873.7 L797.5,874.3 L799.0,874.9 L800.5,875.4 L802.0,875.8 L803.5,876.2 L805.0,876.5 L806.5,876.7 L808.0,876.9 L809.5,877.0 L811.0,877.0 L812.5,877.0 L814.0,876.9 L815.5,876.7 L817.0,876.4 L818.5,876.1 L820.0,875.8 L821.5,875.3 L823.0,874.8 L824.5,874.2 L826.0,873.6 L827.5,872.9 L829.0,872.1 L830.5,871.3 L832.0,870.4 L833.5,869.4 L835.0,868.4 L836.5,867.3 L838.0,866.1 L839.5,864.9 L841.0,863.6 L842.5,862.3 L844.0,860.9 L845.5,859.4 L847.0,857.9 L848.5,856.3 L850.0,854.7 L851.5,853.0 L853.0,851.2 L854.5,849.4 L856.0,847.5 L857.5,845.6 L859.0,843.6 L860.5,841.6 L862.0,839.5 L863.5,837.3 L865.0,835.2 L866.5,832.9 L868.0,830.6 L869.5,828.3 L871.0,825.9 L872.5,823.4 L874.0,821.0 L875.5,818.4 L877.0,815.9 L878.5,813.3 L880.0,810.6 L881.5,807.9 L883.0,805.2 L884.5,802.4 L886.0,799.6 L887.5,796.7 L889.0,793.9 L890.5,791.0 L892.0,788.0 L893.5,785.0 L895.0,782.0 L896.5,779.0 L898.0,775.9 L899.5,772.8 L901.0,769.7 L902.5,766.6 L904.0,763.4 L905.5,760.2 L907.0,757.0 L908.5,753.8 L910.0,750.5 L911.5,747.3 L913.0,744.0 L914.5,740.7 L916.0,737.4 L917.5,734.1 L919.0,730.8 L920.5,727.5 L922.0,724.1 L923.5,720.8 L925.0,717.4 L926.5,714.1 L928.0,710.7 L929.5,707.4 L931.0,704.0 L932.5,700.7 L934.0,697.3 L935.5,694.0 L937.0,690.7 L938.5,687.3 L940.0,684.0 L941.5,680.7 L943.0,677.4 L944.5,674.1 L946.0,670.9 L947.5,667.6 L949.0,664.4 L950.5,661.2 L952.0,658.0 L953.5,654.8 L955.0,651.6 L956.5,648.5 L958.0,645.4 L959.5,642.3 L961.0,639.3 L962.5,636.2 L964.0,633.3 L965.5,630.3 L967.0,627.4 L968.5,624.5 L970.0,621.6 L971.5,618.8 L973.0,616.0 L974.5,613.2 L976.0,610.5 L977.5,607.8 L979.0,605.2 L980.5,602.6 L982.0,600.0 L983.5,597.5 L985.0,595.1 L986.5,592.7 L988.0,590.3 L989.5,588.0 L991.0,585.7 L992.5,583.5 L994.0,581.3 L995.5,579.2 L997.0,577.1 L998.5,575.1 L1000.0,573.2 L1001.5,571.3 L1003.0,569.4 L1004.5,567.6 L1006.0,565.9 L1007.5,564.2 L1009.0,562.6 L1010.5,561.0 L1012.0,559.6 L1013.5,558.1 L1015.0,556.7 L1016.5,555.4 L1018.0,554.2 L1019.5,553.0 L1021.0,551.9 L1022.5,550.8 L1024.0,549.8 L1025.5,548.9 L1027.0,548.0 L1028.5,547.2 L1030.0,546.4 L1031.5,545.8 L1033.0,545.2 L1034.5,544.6 L1036.0,544.1 L1037.5,543.7 L1039.0,543.4 L1040.5,543.1 L1042.0,542.9 L1043.5,542.8 L1045.0,542.7 L1046.5,542.7 L1048.0,542.7 L1049.5,542.9 L1051.0,543.1 L1052.5,543.3 L1054.0,543.7 L1055.5,544.1 L1057.0,544.5 L1058.5,545.0 L1060.0,545.6 L1061.5,546.3 L1063.0,547.0 L1064.5,547.8 L1066.0,548.7 L1067.5,549.6 L1069.0,550.6 L1070.5,551.6 L1072.0,552.7 L1073.5,553.9 L1075.0,555.2 L1076.5,556.5 L1078.0,557.8 L1079.5,559.3 L1081.0,560.7 L1082.5,562.3 L1084.0,563.9 L1085.5,565.6 L1087.0,567.3 L1088.5,569.1 L1090.0,570.9 L1091.5,572.8 L1093.0,574.7 L1094.5,576.7 L1096.0,578.8 L1097.5,580.9 L1099.0,583.1 L1100.5,585.3 L1102.0,587.5 L1103.5,589.8 L1105.0,592.2 L1106.5,594.6 L1108.0,597.0 L1109.5,599.5 L1111.0,602.1 L1112.5,604.7 L1114.0,607.3 L1115.5,610.0 L1117.0,612.7 L1118.5,615.4 L1120.0,618.2 L1121.5,621.0 L1123.0,623.9 L1124.5,626.8 L1126.0,629.7 L1127.5,632.7 L1129.0,635.6 L1130.5,638.7 L1132.0,641.7 L1133.5,644.8 L1135.0,647.9 L1136.5,651.0 L1138.0,654.2 L1139.5,657.3 L1141.0,660.5 L1142.5,663.7 L1144.0,667.0 L1145.5,670.2 L1147.0,673.5 L1148.5,676.8 L1150.0,680.1 L1151.5,683.4 L1153.0,686.7 L1154.5,690.0 L1156.0,693.3 L1157.5,696.7 L1159.0,700.0 L1160.5,703.4 L1162.0,706.7 L1163.5,710.1 L1165.0,713.4 L1166.5,716.8 L1168.0,720.1 L1169.5,723.5 L1171.0,726.8 L1172.5,730.1 L1174.0,733.4 L1175.5,736.8 L1177.0,740.1 L1178.5,743.4 L1180.0,746.6 L1181.5,749.9 L1183.0,753.1 L1184.5,756.4 L1186.0,759.6 L1187.5,762.8 L1189.0,765.9 L1190.5,769.1 L1192.0,772.2 L1193.5,775.3 L1195.0,778.4 L1196.5,781.4 L1198.0,784.4 L1199.5,787.4 L1201.0,790.4 L1202.5,793.3 L1204.0,796.2 L1205.5,799.0 L1207.0,801.8 L1208.5,804.6 L1210.0,807.4 L1211.5,810.1 L1213.0,812.7 L1214.5,815.4 L1216.0,817.9 L1217.5,820.5 L1219.0,823.0 L1220.5,825.4 L1222.0,827.8 L1223.5,830.2 L1225.0,832.5 L1226.5,834.7 L1228.0,836.9 L1229.5,839.1 L1231.0,841.2 L1232.5,843.2 L1234.0,845.2 L1235.5,847.1 L1237.0,849.0 L1238.5,850.9 L1240.0,852.6 L1241.5,854.3 L1243.0,856.0 L1244.5,857.6 L1246.0,859.1 L1247.5,860.6" stroke="#40E040" stroke-width="2" fill="none"/>
</svg>

<!-- bottom -->
<div class="a " style="left:1262px;top:83px;width:16px;height:377px;background:linear-gradient(90deg,#F3F1EC,#FEFEFB)"></div>
<div class="a " style="left:176px;top:459px;width:1086px;height:17px;background:linear-gradient(#EEEDE8,#FEFEFB)"></div>
<div class="a " style="left:176px;top:476px;width:1102px;height:1px;background:#ACA899"></div>
<div class="a " style="left:176px;top:477px;width:1102px;height:1px;background:#FCFCF6"></div>
<div class="a " style="left:175px;top:82px;width:1px;height:891px;background:#716F64"></div>
<div class="a " style="left:1262px;top:459px;width:16px;height:17px;background:#ECE9D8"></div>
<div class="a " style="left:1262px;top:84px;width:15px;height:15px;background:linear-gradient(135deg,#E2EBFE,#C3D3FD 50%,#B4C8F6);border:1px solid #fff;border-radius:2px;box-shadow:0 0 0 0.5px #B9C9EF"><svg class="a" style="left:0;top:0" width="14" height="14"><path d="M3.5 8.5 L7 5 L10.5 8.5" fill="none" stroke="#4D6185" stroke-width="2"/></svg></div>
<div class="a " style="left:1262px;top:101px;width:15px;height:36px;background:linear-gradient(135deg,#E2EBFE,#C3D3FD 50%,#B4C8F6);border:1px solid #fff;border-radius:2px;box-shadow:0 0 0 0.5px #B9C9EF"><svg class="a" style="left:3px;top:14px" width="8" height="8"><path d="M0 0.5H8M0 2.5H8M0 4.5H8M0 6.5H8" stroke="#EEF4FE"/></svg></div>
<div class="a " style="left:1262px;top:442px;width:15px;height:16px;background:linear-gradient(135deg,#E2EBFE,#C3D3FD 50%,#B4C8F6);border:1px solid #fff;border-radius:2px;box-shadow:0 0 0 0.5px #B9C9EF"><svg class="a" style="left:0;top:0" width="14" height="14"><path d="M3.5 5.5 L7 9 L10.5 5.5" fill="none" stroke="#4D6185" stroke-width="2"/></svg></div>
<div class="a " style="left:177px;top:460px;width:15px;height:15px;background:linear-gradient(135deg,#E2EBFE,#C3D3FD 50%,#B4C8F6);border:1px solid #fff;border-radius:2px;box-shadow:0 0 0 0.5px #B9C9EF"><svg class="a" style="left:0;top:0" width="14" height="14"><path d="M8.5 3.5 L5 7 L8.5 10.5" fill="none" stroke="#4D6185" stroke-width="2"/></svg></div>
<div class="a " style="left:193px;top:460px;width:328px;height:15px;background:linear-gradient(135deg,#E2EBFE,#C3D3FD 50%,#B4C8F6);border:1px solid #fff;border-radius:2px;box-shadow:0 0 0 0.5px #B9C9EF"><svg class="a" style="left:158px;top:3px" width="8" height="8"><path d="M0.5 0V8M2.5 0V8M4.5 0V8M6.5 0V8" stroke="#EEF4FE"/></svg></div>
<div class="a " style="left:1245px;top:460px;width:15px;height:15px;background:linear-gradient(135deg,#E2EBFE,#C3D3FD 50%,#B4C8F6);border:1px solid #fff;border-radius:2px;box-shadow:0 0 0 0.5px #B9C9EF"><svg class="a" style="left:0;top:0" width="14" height="14"><path d="M5.5 3.5 L9 7 L5.5 10.5" fill="none" stroke="#4D6185" stroke-width="2"/></svg></div>
<div class="a " style="left:175px;top:482px;width:1103px;height:1px;background:#ACA899"></div>
<div class="a " style="left:175px;top:483px;width:1103px;height:2px;background:#FDFDF8"></div>
<div class="a " style="left:176px;top:932px;width:1102px;height:17px;background-color:#F4F3EE;background-image:repeating-conic-gradient(#FFFFFF 0 25%,#E8E6DA 0 50%);background-size:2px 2px"></div>
<div class="a " style="left:176px;top:932px;width:16px;height:17px;background:#ECE9D8;border:1px solid;border-color:#F4F3EE #716F64 #716F64 #F4F3EE;box-shadow:inset -1px -1px 0 #ACA899,inset 1px 1px 0 #fff"><svg class="a" style="left:4px;top:4px" width="8" height="8"><path d="M2 4 L6 0 V8 Z" fill="#000"/></svg></div>
<div class="a " style="left:192px;top:932px;width:18px;height:17px;background:#ECE9D8;border:1px solid;border-color:#F4F3EE #716F64 #716F64 #F4F3EE;box-shadow:inset -1px -1px 0 #ACA899,inset 1px 1px 0 #fff"></div>
<div class="a " style="left:1261px;top:932px;width:16px;height:17px;background:#ECE9D8;border:1px solid;border-color:#F4F3EE #716F64 #716F64 #F4F3EE;box-shadow:inset -1px -1px 0 #ACA899,inset 1px 1px 0 #fff"><svg class="a" style="left:5px;top:4px" width="8" height="8"><path d="M5 4 L1 0 V8 Z" fill="#000"/></svg></div>
<div class="a " style="left:175px;top:972px;width:1103px;height:1px;background:#fff"></div>
<svg class="a" style="left:176px;top:950px" width="1102" height="24" viewBox="176 950 1102 24"><path d="M176 955.5 H1278" stroke="#000" stroke-width="1"/><path d="M250 955.5 L254 970.5 H342 L346.5 955.5" fill="#ECE9D8" stroke="#000" stroke-width="1"/><path d="M184 955.5 L189 970.5 H247 L251.5 955.5 Z" fill="#fff" stroke="#000" stroke-width="1"/><text x="190.5" y="967.5" font-family="Liberation Sans" font-size="12" fill="#000" textLength="54.5" lengthAdjust="spacingAndGlyphs">AC Analysis</text><text x="255.3" y="967.5" font-family="Liberation Sans" font-size="12" fill="#000" textLength="83.7" lengthAdjust="spacingAndGlyphs">Transient Analysis</text></svg>
<div class="a " style="left:0;top:974px;width:1280px;height:1px;background:#fff"></div>
<div class="a " style="left:0;top:977px;width:49px;height:16px;border-top:1px solid #ACA899;border-left:1px solid #ACA899;border-right:1px solid #fff"></div>
<div class="a " style="left:52px;top:977px;width:1228px;height:16px;border-top:1px solid #ACA899;border-left:1px solid #ACA899"></div>

<!-- taskbar -->
<div class="a " style="left:0;top:994px;width:1280px;height:30px;background:linear-gradient(#3A7AF0 0%,#5E9DF8 6%,#2B66E4 14%,#245CDC 50%,#2157D8 85%,#1C48C0 100%)"></div>
<div class="a " style="left:0;top:994px;width:98px;height:30px;border-radius:0 12px 12px 0/0 15px 15px 0;background:linear-gradient(#3A8A3A 0%,#5CB85C 10%,#3EA03E 30%,#3AA23E 70%,#2C8A30 100%);box-shadow:inset -3px 0 4px #1E6A22"><svg class="a" style="left:11px;top:6px" width="19" height="18"><path d="M1 2 Q5 0 8.5 2 L7.5 8 Q4 6.5 0 8 Z" fill="#E85A20"/><path d="M10 2.5 Q14 4 18 2 L17 8.5 Q13 10 9 8.5 Z" fill="#50B030"/><path d="M0 9.5 Q4 8 7.5 9.5 L6.5 16 Q3 14.5 -1 16 Z" fill="#4A80E8"/><path d="M9 10 Q13 11.5 17 10 L16 16.5 Q12 18 8 16.5 Z" fill="#F0C020"/></svg><span class="a" style="left:35px;top:5px;color:#fff;font-size:18px;font-weight:bold;font-style:italic;text-shadow:1px 1px 1px #1A4A1A">Start</span></div>
<div class="a " style="left:108px;top:997px;width:159px;height:25px;border-radius:3px;background:#1E4FC4;box-shadow:inset 1px 1px 1px #163C9C,inset -1px -1px 0 #3A70E0"><svg class="a" style="left:10px;top:4px" width="17" height="17"><rect x="0.5" y="0.5" width="16" height="16" fill="#F8E0F8" stroke="#F0C0F0"/><rect x="1.5" y="1.5" width="14" height="14" fill="#fff"/><path d="M1.5 3.3h9M1.5 5.5h9M2.5 3v9.5h9M7.5 5.5v4.5" stroke="#505040" stroke-width="1" fill="none"/><path d="M9.5 2 h3 l3 2 l-3 2 h-3z" fill="#D02818"/><circle cx="11.5" cy="11" r="2.4" fill="#1828C0"/><circle cx="4.5" cy="12" r="2" fill="#20A040"/></svg><span class="a" style="left:30px;top:6px;color:#fff;font-size:11px">CircuitMaker</span></div>
<div class="a " style="left:1097px;top:1003px;color:#fff;font-size:11px">HU</div>
<div class="a " style="left:1134px;top:994px;width:146px;height:30px;background:linear-gradient(#18A0F8 0%,#0F8CEC 15%,#0C86E8 70%,#1070D8 100%);border-left:1px solid #0A50B0;box-shadow:inset 1px 0 1px #40B0FF"><svg class="a" style="left:8px;top:7px" width="100" height="18"><path d="M3 13 L14 4 L16 6 L6 14 Z" fill="#F04040"/><path d="M4 14 L15 6 L16 8 L7 15 Z" fill="#40C040"/><path d="M5 15 L16 8 L17 10 L8 16 Z" fill="#4060F0"/><path d="M2 15 H12 L10 17 H1Z" fill="#E0E0E0"/><path d="M22 3 L28 1 L34 3 V9 Q34 14 28 17 Q22 14 22 9 Z" fill="#E02020" stroke="#fff" stroke-width="0.8"/><path d="M26 6.5 L30 10.5 M30 6.5 L26 10.5" stroke="#fff" stroke-width="1.5"/><path d="M39 6 H42 L47 2 V16 L42 12 H39 Z" fill="#F08030" stroke="#803010" stroke-width="0.6"/><path d="M49 5 Q51 9 49 13 M51 3 Q54 9 51 15" fill="none" stroke="#404040" stroke-width="1"/><circle cx="62" cy="8" r="5.5" fill="#B0B0B0" stroke="#505050"/><path d="M58 12 L66 16" stroke="#707070" stroke-width="2"/><rect x="76" y="1" width="10" height="16" rx="5" fill="#1030C0"/><path d="M79 5 L83 9 L80 13 V5 L83 8 L79 12" fill="none" stroke="#E02020" stroke-width="1.2"/></svg><span class="a" style="left:106px;top:9px;color:#fff;font-size:11px">17:47</span></div>

</body></html>
